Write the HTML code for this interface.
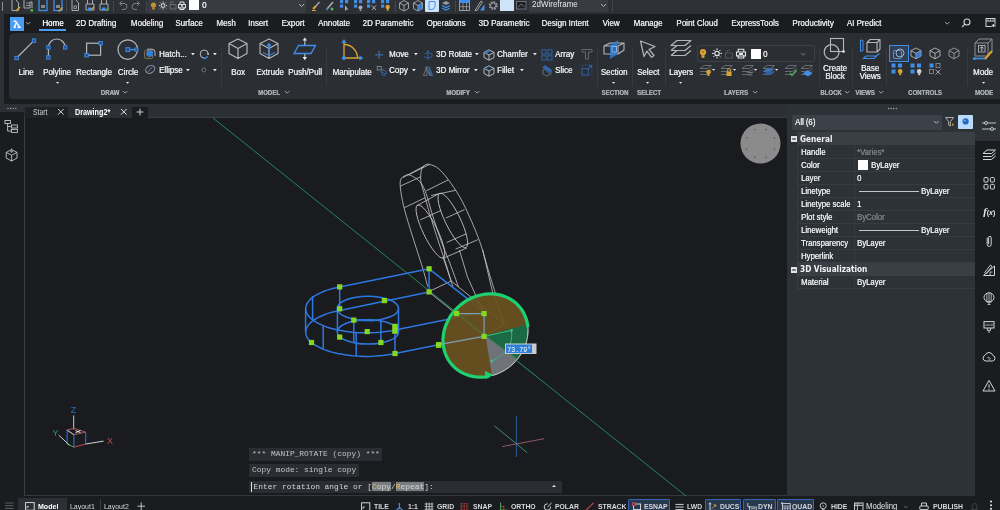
<!DOCTYPE html>
<html lang="en"><head><meta charset="utf-8"><title>Drawing2 - CAD</title>
<style>
html,body{margin:0;padding:0;background:#1a1b1e;}
body{width:1000px;height:510px;overflow:hidden;position:relative;font-family:"Liberation Sans",sans-serif;}
#app{position:absolute;left:0;top:0;width:1000px;height:510px;overflow:hidden;background:#1a1b1e;will-change:transform;}
#app div,#app span.t,#app svg,#app i.ar{position:absolute;display:block;}
span.t{white-space:nowrap;}
i.ar{width:0;height:0;border-style:solid;border-color:transparent;}
svg{overflow:visible;}
</style></head>
<body><div id="app">
<div style="left:0px;top:0px;width:1000px;height:14px;background:#2d3035;"></div>
<div style="left:0px;top:14px;width:1000px;height:19px;background:#1b1c1f;"></div>
<div style="left:0px;top:14px;width:4px;height:90px;background:#2d3136;"></div>
<div style="left:9px;top:33px;width:995px;height:66.5px;background:#2b2f34;border-radius:5px 0 0 5px;"></div>
<div style="left:4px;top:99px;width:996px;height:5px;background:#1b1c1f;"></div>
<div style="left:0px;top:104px;width:1000px;height:14px;background:#2c3034;"></div>
<div style="left:0px;top:112px;width:24px;height:6px;background:#1b1c1f;"></div>
<div style="left:0px;top:118px;width:24px;height:378px;background:#1b1c1f;"></div>
<div style="left:24px;top:117px;width:763px;height:379px;background:#1a1b1e;border-left:1px solid #3a3d42;border-top:1px solid #3a3d42;border-bottom:1px solid #34373b;box-sizing:border-box;"></div>
<div style="left:787px;top:105px;width:188px;height:391px;background:#2d3237;"></div>
<div style="left:975px;top:105px;width:25px;height:391px;background:#1b1c1f;"></div>
<div style="left:975px;top:105px;width:25px;height:36px;background:#2d3237;"></div>
<div style="left:0px;top:496px;width:1000px;height:14px;background:#1b1c1f;"></div>
<div style="left:2px;top:2px;width:1px;height:9px;background:#8a8d91;"></div>
<svg style="left:11px;top:0px;" width="10" height="13" viewBox="0 0 10 13"><path d="M1 -1 V10.5 H7.5 V3 L5 0" fill="none" stroke="#a9acb0" stroke-width="1"/><path d="M5 11 L9 7" stroke="#e0a030" stroke-width="1.6"/></svg>
<svg style="left:23px;top:0px;" width="10" height="13" viewBox="0 0 10 13"><path d="M1 -1 V8 H7 V2 H9 V8" fill="none" stroke="#a9acb0" stroke-width="1"/><path d="M3 3 H7 M3 5.5 H7" stroke="#a9acb0" stroke-width=".8"/><rect x="7.5" y="9" width="2.5" height="2.5" fill="#4fb84f"/></svg>
<svg style="left:37.5px;top:0px;" width="10" height="13" viewBox="0 0 10 13"><rect x="1" y="-1" width="8" height="11.5" fill="none" stroke="#3f8fe8" stroke-width="1.3"/><rect x="3" y="5" width="4" height="3" fill="#a9acb0" opacity=".7"/></svg>
<svg style="left:52.5px;top:0px;" width="10" height="13" viewBox="0 0 10 13"><rect x="1" y="-1" width="8" height="11.5" fill="none" stroke="#3f8fe8" stroke-width="1.3"/><rect x="3" y="5" width="4" height="3" fill="#a9acb0" opacity=".7"/><path d="M5.5 11.5 L9.5 7.5" stroke="#e0a030" stroke-width="1.6"/></svg>
<div style="left:66px;top:1px;width:1px;height:11px;background:#44484d;"></div>
<svg style="left:71px;top:0px;" width="10" height="13" viewBox="0 0 10 13"><path d="M1 -1 V10.5 H7.5 V3 L5 0" fill="none" stroke="#a9acb0" stroke-width="1"/><rect x="3" y="6" width="2.5" height="2.5" fill="none" stroke="#a9acb0" stroke-width=".8"/></svg>
<svg style="left:84.5px;top:0px;" width="10" height="13" viewBox="0 0 10 13"><path d="M1 10 V4 H9 V10 Z M2.5 4 V-1 H7.5 V4" fill="none" stroke="#a9acb0" stroke-width="1"/><rect x="3" y="7.5" width="3" height="3" fill="#3f8fe8"/><path d="M6 9.5 L9 7" stroke="#e0a030" stroke-width="1.5"/></svg>
<svg style="left:98.5px;top:0px;" width="10" height="13" viewBox="0 0 10 13"><path d="M1 10 V4 H9 V10 Z M2.5 4 V-1 H7.5 V4" fill="none" stroke="#a9acb0" stroke-width="1"/><rect x="3" y="7.5" width="3.5" height="3" fill="#3f8fe8"/><rect x="7.5" y="8.5" width="2" height="2" fill="#4fb84f"/></svg>
<div style="left:113px;top:1px;width:1px;height:11px;background:#44484d;"></div>
<svg style="left:117.5px;top:0px;" width="10" height="13" viewBox="0 0 10 13"><path d="M1.5 3.5 H6 A3 3 0 0 1 6 9.5 H4 M4 1 L1.5 3.5 L4 6" fill="none" stroke="#7d8186" stroke-width="1"/></svg>
<svg style="left:131px;top:0px;" width="10" height="13" viewBox="0 0 10 13"><path d="M8.5 3.5 H4 A3 3 0 0 0 4 9.5 H6 M6 1 L8.5 3.5 L6 6" fill="none" stroke="#7d8186" stroke-width="1"/></svg>
<div style="left:146px;top:1px;width:1px;height:11px;background:#44484d;"></div>
<div style="left:148px;top:0px;width:158px;height:13px;background:#383c42;border-radius:0 0 2px 2px;"></div>
<svg style="left:149px;top:0px;" width="12" height="13" viewBox="0 0 12 13"><circle cx="4.5" cy="5" r="2.6" fill="#c8922c"/><rect x="3.3" y="7.5" width="2.4" height="2" fill="#c8922c"/></svg>
<svg style="left:158px;top:0px;" width="12" height="13" viewBox="0 0 12 13"><circle cx="5" cy="5.5" r="1.8" fill="none" stroke="#e8e8e8" stroke-width="1"/><path d="M5 1.5V2.7M5 8.3V9.5M1 5.5H2.2M7.8 5.5H9M2.2 2.7l.9.9M7.8 8.3l-.9-.9M2.2 8.3l.9-.9M7.8 2.7l-.9.9" stroke="#e8e8e8" stroke-width=".9"/></svg>
<svg style="left:168px;top:0px;" width="12" height="13" viewBox="0 0 12 13"><path d="M2 4.5H8V9H2Z M2.5 4.5V3A1.5 1.5 0 0 1 5.5 3" fill="none" stroke="#6d7278" stroke-width=".9"/></svg>
<svg style="left:177px;top:0px;" width="12" height="13" viewBox="0 0 12 13"><path d="M1.5 8V4.5H8.5V8Z M3 4.5V2H7V4.5 M3 7V9.5H7V7" fill="none" stroke="#e0e0e0" stroke-width="1"/><circle cx="5" cy="6" r="1" fill="#e0e0e0"/></svg>
<div style="left:189px;top:0px;width:10px;height:10px;background:#ffffff;"></div>
<span class="t" style="left:201.6px;top:-0.21px;font-size:9.3px;line-height:11.62px;color:#e6e6e6;transform-origin:0 50%;transform:scaleX(0.86);text-shadow:.35px 0 0 #e6e6e6;">0</span>
<svg style="left:298.0px;top:3.25px;" width="7" height="4.5" viewBox="0 0 7 4.5"><path d="M1 1 L3.5 3.5 L6 1" fill="none" stroke="#b0b4b8" stroke-width="1"/></svg>
<svg style="left:311px;top:0px;" width="10" height="13" viewBox="0 0 10 13"><path d="M2 9 L5 6" stroke="#e0a030" stroke-width="2.2"/><path d="M5 6 L8.5 2" stroke="#a9acb0" stroke-width="1.2"/><path d="M1 10.5 H5" stroke="#e0a030" stroke-width="1"/></svg>
<svg style="left:325px;top:0px;" width="10" height="13" viewBox="0 0 10 13"><path d="M2 9 L8 2" stroke="#a9acb0" stroke-width="1.6"/><path d="M1.5 10 L3 8" stroke="#3f8fe8" stroke-width="1.4"/><circle cx="7" cy="9" r="1.5" fill="#4fb84f"/></svg>
<svg style="left:339px;top:0px;" width="11" height="13" viewBox="0 0 11 13"><rect x="1" y="0" width="3.2" height="3.2" fill="#3f8fe8"/><rect x="6" y="0" width="3.2" height="3.2" fill="#3f8fe8"/><rect x="1" y="4.5" width="3.2" height="3.2" fill="#3f8fe8"/><path d="M6 5 L9.5 10 L7.5 9.5 L6 11 Z" fill="#a9acb0"/></svg>
<svg style="left:352.5px;top:0px;" width="11" height="13" viewBox="0 0 11 13"><rect x="1" y="0" width="3.2" height="3.2" fill="#3f8fe8"/><rect x="6" y="0" width="3.2" height="3.2" fill="#3f8fe8"/><rect x="1" y="4.5" width="3.2" height="3.2" fill="#3f8fe8"/><circle cx="7.5" cy="7.5" r="2" fill="#a9acb0"/><rect x="6.7" y="9.5" width="1.6" height="1.5" fill="#a9acb0"/></svg>
<svg style="left:366px;top:0px;" width="11" height="13" viewBox="0 0 11 13"><rect x="1" y="0" width="3.2" height="3.2" fill="#3f8fe8"/><rect x="6" y="0" width="3.2" height="3.2" fill="#3f8fe8"/><rect x="1" y="4.5" width="3.2" height="3.2" fill="#3f8fe8"/><path d="M6 5.5 L10 10 M10 5.5 L6 10" stroke="#a9acb0" stroke-width="1"/></svg>
<svg style="left:380px;top:0px;" width="11" height="13" viewBox="0 0 11 13"><rect x="1" y="0" width="3.2" height="3.2" fill="#3f8fe8"/><rect x="6" y="0" width="3.2" height="3.2" fill="#3f8fe8"/><rect x="1" y="4.5" width="3.2" height="3.2" fill="#3f8fe8"/><circle cx="7.7" cy="7" r="2.2" fill="#e0a030"/><rect x="6.8" y="9" width="1.8" height="1.8" fill="#e0a030"/></svg>
<div style="left:395px;top:1px;width:1px;height:11px;background:#44484d;"></div>
<svg style="left:399px;top:0px;" width="10" height="13" viewBox="0 0 10 13"><path d="M5 .5 L9.5 3 V8.5 L5 11 L.5 8.5 V3 Z M.5 3 L5 5.5 L9.5 3 M5 5.5 V11" fill="none" stroke="#a9acb0" stroke-width="0.9" stroke-linejoin="round"/></svg>
<svg style="left:412.5px;top:0px;" width="10" height="13" viewBox="0 0 10 13"><path d="M5 .5 L9.5 3 V8.5 L5 11 L.5 8.5 V3 Z M.5 3 L5 5.5 L9.5 3 M5 5.5 V11" fill="none" stroke="#a9acb0" stroke-width="0.9" stroke-linejoin="round"/><path d="M5 5.5 L9.5 3 V8.5 L5 11Z" fill="#3f8fe8" opacity=".8"/></svg>
<div style="left:425px;top:0px;width:14px;height:12px;background:#cfe3fa;border-radius:0 0 1px 1px;"></div>
<svg style="left:427px;top:0px;" width="10" height="13" viewBox="0 0 10 13"><path d="M2 1.5 H8 V6.5 A3.5 3.5 0 0 1 4.5 9.5 H2 Z" fill="none" stroke="#4a90e2" stroke-width="1"/></svg>
<svg style="left:441px;top:0px;" width="10" height="13" viewBox="0 0 10 13"><path d="M1 3 L5 1 L9 3 L5 5Z" fill="#a9acb0" opacity=".85"/><path d="M1 5.5 L5 7.5 L9 5.5 M1 8 L5 10 L9 8" fill="none" stroke="#3f8fe8" stroke-width="1.2"/></svg>
<div style="left:455px;top:1px;width:1px;height:11px;background:#44484d;"></div>
<svg style="left:459px;top:0px;" width="12" height="13" viewBox="0 0 12 13"><rect x=".5" y="0" width="10" height="10.5" fill="none" stroke="#a9acb0" stroke-width=".9"/><rect x=".5" y="0" width="10" height="3" fill="#3f8fe8"/><path d="M4 3V10.5M7.5 3V10.5M.5 6.7H10.5" stroke="#a9acb0" stroke-width=".7"/></svg>
<svg style="left:474px;top:0px;" width="12" height="13" viewBox="0 0 12 13"><path d="M1 10.5 L7 1 L8.5 2 L3 10.5Z" fill="none" stroke="#a9acb0" stroke-width=".9"/><path d="M6 10.5 H10.5 V4Z" fill="#3f8fe8"/></svg>
<svg style="left:487.5px;top:0px;" width="11" height="13" viewBox="0 0 11 13"><circle cx="5.2" cy="5.5" r="3.6" fill="none" stroke="#9a9ea3" stroke-width="1.8" stroke-dasharray="1.6 1.2"/><circle cx="5.2" cy="5.5" r="2.6" fill="none" stroke="#9a9ea3" stroke-width="1"/></svg>
<div style="left:500px;top:0px;width:14px;height:11px;background:#cfe3fa;"></div>
<svg style="left:516px;top:0px;" width="11" height="13" viewBox="0 0 11 13"><rect x=".5" y="1.5" width="9.5" height="7.5" fill="#1d1f22" stroke="#7d8186" stroke-width=".8"/><path d="M2 7.5 L5 4 L8.5 7" fill="none" stroke="#7d8186" stroke-width=".8"/></svg>
<div style="left:529px;top:0px;width:79px;height:12px;background:#383c42;"></div>
<span class="t" style="left:531.5px;top:-0.61px;font-size:9.3px;line-height:11.62px;color:#e6e6e6;transform-origin:0 50%;transform:scaleX(0.86);">2dWireframe</span>
<svg style="left:600.0px;top:3.25px;" width="7" height="4.5" viewBox="0 0 7 4.5"><path d="M1 1 L3.5 3.5 L6 1" fill="none" stroke="#b0b4b8" stroke-width="1"/></svg>
<div style="left:612px;top:1px;width:1px;height:11px;background:#44484d;"></div>
<div style="left:10px;top:17px;width:14px;height:14px;background:#4a9cf5;"></div>
<svg style="left:10px;top:17px;" width="14" height="14" viewBox="0 0 14 14"><path d="M4.2 4.2 L5.6 4.2 L9.6 10.2 M6.3 6.2 L4.2 10.2 H5.4 M8.2 10.2 H10.2" fill="none" stroke="#fff" stroke-width="1.4" stroke-linecap="round" stroke-linejoin="round"/></svg>
<svg style="left:24.8px;top:21.4px;" width="6.4" height="4.2" viewBox="0 0 6.4 4.2"><path d="M1 1 L3.2 3.2 L5.4 1" fill="none" stroke="#9aa0a6" stroke-width="1"/></svg>
<span class="t" style="left:53px;top:18.39px;font-size:9.3px;line-height:11.62px;color:#ffffff;transform:translateX(-50%) scaleX(0.86);text-shadow:.3px 0 0 #e3e4e6;">Home</span>
<span class="t" style="left:96px;top:18.39px;font-size:9.3px;line-height:11.62px;color:#e3e4e6;transform:translateX(-50%) scaleX(0.86);text-shadow:.3px 0 0 #e3e4e6;">2D Drafting</span>
<span class="t" style="left:146.5px;top:18.39px;font-size:9.3px;line-height:11.62px;color:#e3e4e6;transform:translateX(-50%) scaleX(0.86);text-shadow:.3px 0 0 #e3e4e6;">Modeling</span>
<span class="t" style="left:189px;top:18.39px;font-size:9.3px;line-height:11.62px;color:#e3e4e6;transform:translateX(-50%) scaleX(0.86);text-shadow:.3px 0 0 #e3e4e6;">Surface</span>
<span class="t" style="left:226px;top:18.39px;font-size:9.3px;line-height:11.62px;color:#e3e4e6;transform:translateX(-50%) scaleX(0.86);text-shadow:.3px 0 0 #e3e4e6;">Mesh</span>
<span class="t" style="left:258px;top:18.39px;font-size:9.3px;line-height:11.62px;color:#e3e4e6;transform:translateX(-50%) scaleX(0.86);text-shadow:.3px 0 0 #e3e4e6;">Insert</span>
<span class="t" style="left:292.5px;top:18.39px;font-size:9.3px;line-height:11.62px;color:#e3e4e6;transform:translateX(-50%) scaleX(0.86);text-shadow:.3px 0 0 #e3e4e6;">Export</span>
<span class="t" style="left:333.5px;top:18.39px;font-size:9.3px;line-height:11.62px;color:#e3e4e6;transform:translateX(-50%) scaleX(0.86);text-shadow:.3px 0 0 #e3e4e6;">Annotate</span>
<span class="t" style="left:387.5px;top:18.39px;font-size:9.3px;line-height:11.62px;color:#e3e4e6;transform:translateX(-50%) scaleX(0.86);text-shadow:.3px 0 0 #e3e4e6;">2D Parametric</span>
<span class="t" style="left:445.5px;top:18.39px;font-size:9.3px;line-height:11.62px;color:#e3e4e6;transform:translateX(-50%) scaleX(0.86);text-shadow:.3px 0 0 #e3e4e6;">Operations</span>
<span class="t" style="left:503.5px;top:18.39px;font-size:9.3px;line-height:11.62px;color:#e3e4e6;transform:translateX(-50%) scaleX(0.86);text-shadow:.3px 0 0 #e3e4e6;">3D Parametric</span>
<span class="t" style="left:564.5px;top:18.39px;font-size:9.3px;line-height:11.62px;color:#e3e4e6;transform:translateX(-50%) scaleX(0.86);text-shadow:.3px 0 0 #e3e4e6;">Design Intent</span>
<span class="t" style="left:610.5px;top:18.39px;font-size:9.3px;line-height:11.62px;color:#e3e4e6;transform:translateX(-50%) scaleX(0.86);text-shadow:.3px 0 0 #e3e4e6;">View</span>
<span class="t" style="left:648px;top:18.39px;font-size:9.3px;line-height:11.62px;color:#e3e4e6;transform:translateX(-50%) scaleX(0.86);text-shadow:.3px 0 0 #e3e4e6;">Manage</span>
<span class="t" style="left:697px;top:18.39px;font-size:9.3px;line-height:11.62px;color:#e3e4e6;transform:translateX(-50%) scaleX(0.86);text-shadow:.3px 0 0 #e3e4e6;">Point Cloud</span>
<span class="t" style="left:754.5px;top:18.39px;font-size:9.3px;line-height:11.62px;color:#e3e4e6;transform:translateX(-50%) scaleX(0.86);text-shadow:.3px 0 0 #e3e4e6;">ExpressTools</span>
<span class="t" style="left:812.5px;top:18.39px;font-size:9.3px;line-height:11.62px;color:#e3e4e6;transform:translateX(-50%) scaleX(0.86);text-shadow:.3px 0 0 #e3e4e6;">Productivity</span>
<span class="t" style="left:863.5px;top:18.39px;font-size:9.3px;line-height:11.62px;color:#e3e4e6;transform:translateX(-50%) scaleX(0.86);text-shadow:.3px 0 0 #e3e4e6;">AI Predict</span>
<div style="left:39px;top:29px;width:27px;height:1.5px;background:#4a9cf5;"></div>
<svg style="left:943.8px;top:20.9px;" width="6.4" height="4.2" viewBox="0 0 6.4 4.2"><path d="M1 1 L3.2 3.2 L5.4 1" fill="none" stroke="#9aa0a6" stroke-width="1"/></svg>
<svg style="left:960px;top:17px;" width="12" height="12" viewBox="0 0 12 12"><circle cx="7" cy="5" r="3" fill="none" stroke="#d0d2d5" stroke-width="1.1"/><path d="M4.8 7.2 L2 10.2" stroke="#d0d2d5" stroke-width="1.2"/></svg>
<svg style="left:985px;top:17px;" width="12" height="12" viewBox="0 0 12 12"><rect x="1" y="1.5" width="9" height="8" fill="none" stroke="#d0d2d5" stroke-width="1"/><path d="M1 4H10" stroke="#d0d2d5" stroke-width="1"/><path d="M3 1.5V4M5.5 1.5V4M8 1.5V4" stroke="#d0d2d5" stroke-width=".6"/><circle cx="8.5" cy="8.5" r="1.8" fill="#d0d2d5" stroke="#1b1c1f" stroke-width=".8"/></svg>
<svg style="left:14px;top:37px;" width="24" height="24" viewBox="0 0 24 24"><path d="M2.6 21 L20 3.6" stroke="#b4b7ba" stroke-width="1.2"/><rect x="0.9000000000000001" y="19.3" width="3.4" height="3.4" fill="#1f4f96" stroke="#3f8fe8" stroke-width=".9"/><rect x="18.3" y="1.9000000000000001" width="3.4" height="3.4" fill="#1f4f96" stroke="#3f8fe8" stroke-width=".9"/></svg>
<span class="t" style="left:25.6px;top:67.19px;font-size:9.3px;line-height:11.62px;color:#e6e7e9;transform:translateX(-50%) scaleX(0.86);text-shadow:.35px 0 0 #e6e7e9;">Line</span>
<svg style="left:44px;top:36px;" width="26" height="24" viewBox="0 0 26 24"><path d="M4.4 21.4 V11.4 A8.4 8.4 0 0 1 21.2 11.4" fill="none" stroke="#b4b7ba" stroke-width="1.2"/><rect x="2.7" y="19.7" width="3.4" height="3.4" fill="#1f4f96" stroke="#3f8fe8" stroke-width=".9"/><rect x="2.7" y="9.700000000000001" width="3.4" height="3.4" fill="#1f4f96" stroke="#3f8fe8" stroke-width=".9"/><rect x="19.5" y="9.700000000000001" width="3.4" height="3.4" fill="#1f4f96" stroke="#3f8fe8" stroke-width=".9"/></svg>
<span class="t" style="left:57.4px;top:67.19px;font-size:9.3px;line-height:11.62px;color:#e6e7e9;transform:translateX(-50%) scaleX(0.86);text-shadow:.35px 0 0 #e6e7e9;">Polyline</span>
<svg style="left:55.6px;top:82.48px" width="3.2" height="1.84" viewBox="0 0 3.2 1.84"><path d="M0 0 H3.2 L1.6 1.84Z" fill="#f0f0f0"/></svg>
<svg style="left:82px;top:38px;" width="24" height="22" viewBox="0 0 24 22"><rect x="4.6" y="5.2" width="14" height="12" fill="none" stroke="#b4b7ba" stroke-width="1.2"/><rect x="2.8999999999999995" y="15.5" width="3.4" height="3.4" fill="#1f4f96" stroke="#3f8fe8" stroke-width=".9"/><rect x="16.900000000000002" y="3.5" width="3.4" height="3.4" fill="#1f4f96" stroke="#3f8fe8" stroke-width=".9"/></svg>
<span class="t" style="left:93.8px;top:67.19px;font-size:9.3px;line-height:11.62px;color:#e6e7e9;transform:translateX(-50%) scaleX(0.86);text-shadow:.35px 0 0 #e6e7e9;">Rectangle</span>
<svg style="left:116px;top:38px;" width="24" height="24" viewBox="0 0 24 24"><circle cx="11.8" cy="11.6" r="9.8" fill="none" stroke="#b4b7ba" stroke-width="1.2"/><path d="M11.8 11.6 H20.4" stroke="#3f8fe8" stroke-width="1.4"/><rect x="9.9" y="9.7" width="3.8" height="3.8" fill="#1f4f96" stroke="#3f8fe8" stroke-width=".9"/><rect x="18.9" y="10.1" width="3" height="3" fill="#1f4f96" stroke="#3f8fe8" stroke-width=".9"/></svg>
<span class="t" style="left:128.4px;top:67.19px;font-size:9.3px;line-height:11.62px;color:#e6e7e9;transform:translateX(-50%) scaleX(0.86);text-shadow:.35px 0 0 #e6e7e9;">Circle</span>
<svg style="left:126.4px;top:82.48px" width="3.2" height="1.84" viewBox="0 0 3.2 1.84"><path d="M0 0 H3.2 L1.6 1.84Z" fill="#f0f0f0"/></svg>
<svg style="left:144px;top:48px;" width="12" height="12" viewBox="0 0 12 12"><rect x=".6" y="2.4" width="8" height="8" rx="1" fill="none" stroke="#8a6f4a" stroke-width="1"/><path d="M3 1.2 H8 A3 3 0 0 1 11 4.2 V8" fill="none" stroke="#b4b7ba" stroke-width="1"/><circle cx="5.6" cy="5.6" r="3.4" fill="#2f7fd6"/></svg>
<span class="t" style="left:158.6px;top:48.99px;font-size:9.3px;line-height:11.62px;color:#e6e7e9;transform-origin:0 50%;transform:scaleX(0.86);text-shadow:.35px 0 0 #e6e7e9;">Hatch...</span>
<svg style="left:190.9px;top:52.71px" width="3.8" height="2.18" viewBox="0 0 3.8 2.18"><path d="M0 0 H3.8 L1.9 2.18Z" fill="#f0f0f0"/></svg>
<svg style="left:199px;top:49px;" width="11" height="11" viewBox="0 0 11 11"><path d="M9.2 5 A4 4 0 1 0 5.2 9" fill="none" stroke="#b4b7ba" stroke-width="1"/><path d="M4 9.2 A4 4 0 0 0 8.6 7.4" fill="none" stroke="#3f8fe8" stroke-width="1.2"/><rect x="8.2" y="4" width="1.8" height="1.8" fill="#b4b7ba"/></svg>
<svg style="left:212.5px;top:52.71px" width="3.8" height="2.18" viewBox="0 0 3.8 2.18"><path d="M0 0 H3.8 L1.9 2.18Z" fill="#f0f0f0"/></svg>
<svg style="left:145px;top:64px;" width="11" height="11" viewBox="0 0 11 11"><ellipse cx="5.2" cy="5.4" rx="4.8" ry="3.6" transform="rotate(-30 5.2 5.4)" fill="none" stroke="#8d9197" stroke-width="1.1"/><path d="M2.6 8.2 L7.8 2.6" stroke="#6d7bb0" stroke-width="1"/></svg>
<span class="t" style="left:158.6px;top:64.79px;font-size:9.3px;line-height:11.62px;color:#e6e7e9;transform-origin:0 50%;transform:scaleX(0.86);text-shadow:.35px 0 0 #e6e7e9;">Ellipse</span>
<svg style="left:186.3px;top:68.51px" width="3.8" height="2.18" viewBox="0 0 3.8 2.18"><path d="M0 0 H3.8 L1.9 2.18Z" fill="#f0f0f0"/></svg>
<svg style="left:201px;top:66.5px;" width="6" height="6" viewBox="0 0 6 6"><circle cx="2.8" cy="2.9" r="2" fill="none" stroke="#74787e" stroke-width=".9"/></svg>
<svg style="left:212.5px;top:68.51px" width="3.8" height="2.18" viewBox="0 0 3.8 2.18"><path d="M0 0 H3.8 L1.9 2.18Z" fill="#f0f0f0"/></svg>
<span class="t" style="left:109.5px;top:88.62px;font-size:7px;line-height:8.75px;color:#a6abb1;font-weight:700;transform:translateX(-50%) scaleX(0.86);text-shadow:.25px 0 0 #a6abb1;">DRAW</span>
<svg style="left:122.3px;top:90.30000000000001px;" width="6.4" height="4.2" viewBox="0 0 6.4 4.2"><path d="M1 1 L3.2 3.2 L5.4 1" fill="none" stroke="#a6abb1" stroke-width="0.9"/></svg>
<div style="left:221px;top:48px;width:1px;height:38px;background:#373b40;"></div>
<svg style="left:228px;top:38px;" width="20" height="22" viewBox="0 0 20 22"><path d="M10 1 L19 5.5 V15.5 L10 20.5 L1 15.5 V5.5 Z M1 5.5 L10 10.5 L19 5.5 M10 10.5 V20.5" fill="none" stroke="#b4b7ba" stroke-width="1.2" stroke-linejoin="round"/></svg>
<span class="t" style="left:238.2px;top:67.19px;font-size:9.3px;line-height:11.62px;color:#e6e7e9;transform:translateX(-50%) scaleX(0.86);text-shadow:.35px 0 0 #e6e7e9;">Box</span>
<svg style="left:259px;top:38px;" width="20" height="22" viewBox="0 0 20 22"><path d="M10 1 L19 5.5 V15.5 L10 20.5 L1 15.5 V5.5 Z M1 5.5 L10 10.5 L19 5.5 M10 10.5 V20.5" fill="none" stroke="#b4b7ba" stroke-width="1.1" stroke-linejoin="round"/><path d="M10 14 V6.5" stroke="#3f8fe8" stroke-width="1.6"/><path d="M7.4 8.2 L10 4.6 L12.6 8.2Z" fill="#3f8fe8"/><path d="M4 14.5 L10 17.5 L16 14.5" fill="none" stroke="#3f8fe8" stroke-width="1"/></svg>
<span class="t" style="left:269.5px;top:67.19px;font-size:9.3px;line-height:11.62px;color:#e6e7e9;transform:translateX(-50%) scaleX(0.86);text-shadow:.35px 0 0 #e6e7e9;">Extrude</span>
<svg style="left:293.4px;top:35.8px;" width="24" height="24" viewBox="0 0 24 24"><path d="M5.5 9.5 H22.5 L18 17.5 H1 Z" fill="none" stroke="#3f8fe8" stroke-width="1.3"/><path d="M11.8 3.5 V9 M11.8 18 V23" stroke="#b4b7ba" stroke-width="1.2"/><path d="M9.6 4.6 L11.8 1.4 L14 4.6Z M9.6 21 L11.8 24.2 L14 21Z" fill="#e8e8e8"/></svg>
<span class="t" style="left:304.6px;top:67.19px;font-size:9.3px;line-height:11.62px;color:#e6e7e9;transform:translateX(-50%) scaleX(0.86);text-shadow:.35px 0 0 #e6e7e9;">Push/Pull</span>
<span class="t" style="left:269px;top:88.62px;font-size:7px;line-height:8.75px;color:#a6abb1;font-weight:700;transform:translateX(-50%) scaleX(0.86);text-shadow:.25px 0 0 #a6abb1;">MODEL</span>
<svg style="left:283.8px;top:90.30000000000001px;" width="6.4" height="4.2" viewBox="0 0 6.4 4.2"><path d="M1 1 L3.2 3.2 L5.4 1" fill="none" stroke="#a6abb1" stroke-width="0.9"/></svg>
<div style="left:326px;top:48px;width:1px;height:38px;background:#373b40;"></div>
<svg style="left:340px;top:38px;" width="24" height="24" viewBox="0 0 24 24"><path d="M4 3 V20 H21" fill="none" stroke="#d9a436" stroke-width="1.3"/><path d="M4 6.5 A13.5 13.5 0 0 1 17.5 20" fill="none" stroke="#d9a436" stroke-width="1.3"/><circle cx="4" cy="20" r="2.1" fill="#3f8fe8"/><path d="M1.4 5 L4 1 L6.6 5Z M19.4 17.4 L23.4 20 L19.4 22.6Z" fill="#3f8fe8"/></svg>
<span class="t" style="left:351.8px;top:67.19px;font-size:9.3px;line-height:11.62px;color:#e6e7e9;transform:translateX(-50%) scaleX(0.86);text-shadow:.35px 0 0 #e6e7e9;">Manipulate</span>
<svg style="left:373px;top:48.8px;" width="12" height="12" viewBox="0 0 12 12"><g transform="translate(1.4 1.2) scale(.78)" opacity=".85"><path d="M6 1.4 V10.6 M1.4 6 H10.6" stroke="#3f8fe8" stroke-width="1"/><path d="M4.8 2.6 L6 .8 L7.2 2.6Z M4.8 9.4 L6 11.2 L7.2 9.4Z M2.6 4.8 L.8 6 L2.6 7.2Z M9.4 4.8 L11.2 6 L9.4 7.2Z" fill="#3f8fe8"/></g></svg>
<span class="t" style="left:389.4px;top:48.99px;font-size:9.3px;line-height:11.62px;color:#e6e7e9;transform-origin:0 50%;transform:scaleX(0.86);text-shadow:.35px 0 0 #e6e7e9;">Move</span>
<svg style="left:413.5px;top:53.11px" width="3.8" height="2.18" viewBox="0 0 3.8 2.18"><path d="M0 0 H3.8 L1.9 2.18Z" fill="#f0f0f0"/></svg>
<svg style="left:376px;top:64.6px;" width="12" height="12" viewBox="0 0 12 12"><rect x="1.2" y="1.4" width="4" height="3.6" fill="none" stroke="#8d9197" stroke-width=".8"/><path d="M5.6 5.6 L8 4.6 L10.6 7.4 L8.6 10.8 L6 9.6Z" fill="none" stroke="#3573c4" stroke-width=".9" stroke-linejoin="round"/><path d="M7 7 L9 9" stroke="#3573c4" stroke-width=".8"/></svg>
<span class="t" style="left:389.4px;top:64.79px;font-size:9.3px;line-height:11.62px;color:#e6e7e9;transform-origin:0 50%;transform:scaleX(0.86);text-shadow:.35px 0 0 #e6e7e9;">Copy</span>
<svg style="left:412.1px;top:68.91px" width="3.8" height="2.18" viewBox="0 0 3.8 2.18"><path d="M0 0 H3.8 L1.9 2.18Z" fill="#f0f0f0"/></svg>
<svg style="left:422px;top:48.8px;" width="12" height="12" viewBox="0 0 12 12"><g opacity=".8"><path d="M6 1.6 V10.6" stroke="#3573c4" stroke-width=".9"/><ellipse cx="6" cy="6.4" rx="4.2" ry="2.4" fill="none" stroke="#3573c4" stroke-width=".9" stroke-dasharray="9 3"/><path d="M4.9 2.8 L6 1 L7.1 2.8Z" fill="#3573c4"/></g></svg>
<span class="t" style="left:436px;top:48.99px;font-size:9.3px;line-height:11.62px;color:#e6e7e9;transform-origin:0 50%;transform:scaleX(0.86);text-shadow:.35px 0 0 #e6e7e9;">3D Rotate</span>
<svg style="left:475.1px;top:53.11px" width="3.8" height="2.18" viewBox="0 0 3.8 2.18"><path d="M0 0 H3.8 L1.9 2.18Z" fill="#f0f0f0"/></svg>
<svg style="left:422px;top:64.6px;" width="12" height="12" viewBox="0 0 12 12"><path d="M5 1.4 L1.4 10.4 H5Z" fill="none" stroke="#7d8187" stroke-width=".8"/><path d="M7 1.4 L10.6 10.4 H7Z" fill="#3a5680" stroke="#3573c4" stroke-width=".7"/><path d="M3.4 2.4 L8.6 10.8" stroke="#7d8187" stroke-width=".7"/></svg>
<span class="t" style="left:436px;top:64.79px;font-size:9.3px;line-height:11.62px;color:#e6e7e9;transform-origin:0 50%;transform:scaleX(0.86);text-shadow:.35px 0 0 #e6e7e9;">3D Mirror</span>
<svg style="left:474.1px;top:68.91px" width="3.8" height="2.18" viewBox="0 0 3.8 2.18"><path d="M0 0 H3.8 L1.9 2.18Z" fill="#f0f0f0"/></svg>
<svg style="left:483px;top:48.8px;" width="12" height="12" viewBox="0 0 12 12"><path d="M6 .8 L11 3.4 V8.6 L6 11.2 L1 8.6 V3.4Z M1 3.4 L6 6 L11 3.4 M6 6 V11.2" fill="none" stroke="#c4c7ca" stroke-width=".9" stroke-linejoin="round"/><path d="M1 3.4 L6 .8 L8 1.9 L3 4.5Z" fill="#3573c4"/></svg>
<span class="t" style="left:497.4px;top:48.99px;font-size:9.3px;line-height:11.62px;color:#e6e7e9;transform-origin:0 50%;transform:scaleX(0.86);text-shadow:.35px 0 0 #e6e7e9;">Chamfer</span>
<svg style="left:533.1px;top:53.11px" width="3.8" height="2.18" viewBox="0 0 3.8 2.18"><path d="M0 0 H3.8 L1.9 2.18Z" fill="#f0f0f0"/></svg>
<svg style="left:483px;top:64.6px;" width="12" height="12" viewBox="0 0 12 12"><path d="M6 .8 L11 3.4 V8.6 L6 11.2 L1 8.6 V3.4Z M1 3.4 L6 6 L11 3.4 M6 6 V11.2" fill="none" stroke="#c4c7ca" stroke-width=".9" stroke-linejoin="round"/><path d="M1.2 6 V3.4 L6 1 L8.5 2.2 A7 7 0 0 0 1.2 6Z" fill="#3573c4"/></svg>
<span class="t" style="left:497.4px;top:64.79px;font-size:9.3px;line-height:11.62px;color:#e6e7e9;transform-origin:0 50%;transform:scaleX(0.86);text-shadow:.35px 0 0 #e6e7e9;">Fillet</span>
<svg style="left:520.1px;top:68.91px" width="3.8" height="2.18" viewBox="0 0 3.8 2.18"><path d="M0 0 H3.8 L1.9 2.18Z" fill="#f0f0f0"/></svg>
<svg style="left:541px;top:48.8px;" width="12" height="12" viewBox="0 0 12 12"><rect x=".8" y=".8" width="4.2" height="4.2" fill="none" stroke="#2f62a8" stroke-width="1"/><rect x="6.8" y=".8" width="4.2" height="4.2" fill="none" stroke="#2f62a8" stroke-width="1"/><rect x=".8" y="6.8" width="4.2" height="4.2" fill="none" stroke="#2f62a8" stroke-width="1"/><rect x="6.8" y="6.8" width="4.2" height="4.2" fill="none" stroke="#2f62a8" stroke-width="1"/></svg>
<span class="t" style="left:555.4px;top:48.99px;font-size:9.3px;line-height:11.62px;color:#e6e7e9;transform-origin:0 50%;transform:scaleX(0.86);text-shadow:.35px 0 0 #e6e7e9;">Array</span>
<svg style="left:541px;top:64.6px;" width="12" height="12" viewBox="0 0 12 12"><path d="M2 5 L6 3 L10 5 V9 L6 11 L2 9Z" fill="none" stroke="#6d7278" stroke-width=".9"/><path d="M1 2 L8 9 L11 5 L4 0Z" fill="#2f6fc0" opacity=".75"/></svg>
<span class="t" style="left:555.4px;top:64.79px;font-size:9.3px;line-height:11.62px;color:#e6e7e9;transform-origin:0 50%;transform:scaleX(0.86);text-shadow:.35px 0 0 #e6e7e9;">Slice</span>
<svg style="left:581px;top:48px;" width="12" height="12" viewBox="0 0 12 12"><path d="M1 1.5 H11 V4 H7.5 V11 H4.5 V4 H1Z" fill="none" stroke="#6c7076" stroke-width=".9"/></svg>
<svg style="left:581px;top:64px;" width="12" height="12" viewBox="0 0 12 12"><rect x="1" y="4.6" width="6.4" height="6.4" fill="none" stroke="#2f62a8" stroke-width=".9"/><rect x="1" y="1" width="10" height="10" fill="none" stroke="#2f62a8" stroke-width=".6" stroke-dasharray="1.5 1.2"/><path d="M6.4 5.6 L10.2 1.8 M8 1.6 H10.4 V4" fill="none" stroke="#3573c4" stroke-width=".8"/></svg>
<span class="t" style="left:458px;top:88.62px;font-size:7px;line-height:8.75px;color:#a6abb1;font-weight:700;transform:translateX(-50%) scaleX(0.86);text-shadow:.25px 0 0 #a6abb1;">MODIFY</span>
<svg style="left:473.8px;top:90.30000000000001px;" width="6.4" height="4.2" viewBox="0 0 6.4 4.2"><path d="M1 1 L3.2 3.2 L5.4 1" fill="none" stroke="#a6abb1" stroke-width="0.9"/></svg>
<div style="left:597px;top:48px;width:1px;height:38px;background:#373b40;"></div>
<svg style="left:602px;top:37px;" width="24" height="24" viewBox="0 0 24 24"><path d="M2 9 L8 6 H22 V13 L16 17 H2Z M2 9 H16 L22 6 M16 9 V17" fill="none" stroke="#b4b7ba" stroke-width="1.1" stroke-linejoin="round"/><path d="M8 8 L16 3 V17 L8 22Z" fill="#2f7fd6" opacity=".8"/><path d="M10 9.5 H14.5 V15 H10Z" fill="none" stroke="#9cc6f5" stroke-width=".8"/></svg>
<span class="t" style="left:614px;top:67.19px;font-size:9.3px;line-height:11.62px;color:#e6e7e9;transform:translateX(-50%) scaleX(0.86);text-shadow:.35px 0 0 #e6e7e9;">Section</span>
<svg style="left:612.4px;top:82.48px" width="3.2" height="1.84" viewBox="0 0 3.2 1.84"><path d="M0 0 H3.2 L1.6 1.84Z" fill="#f0f0f0"/></svg>
<span class="t" style="left:614.5px;top:88.62px;font-size:7px;line-height:8.75px;color:#a6abb1;font-weight:700;transform:translateX(-50%) scaleX(0.86);text-shadow:.25px 0 0 #a6abb1;">SECTION</span>
<div style="left:632px;top:48px;width:1px;height:38px;background:#373b40;"></div>
<svg style="left:638px;top:38px;" width="20" height="22" viewBox="0 0 20 22"><path d="M2.5 3 L17 8.5 L11 11.5 L16 17.5 L13.6 19.4 L8.8 13.2 L6 18.5Z" fill="none" stroke="#b4b7ba" stroke-width="1.2" stroke-linejoin="round"/></svg>
<span class="t" style="left:648px;top:67.19px;font-size:9.3px;line-height:11.62px;color:#e6e7e9;transform:translateX(-50%) scaleX(0.86);text-shadow:.35px 0 0 #e6e7e9;">Select</span>
<svg style="left:646.4px;top:82.48px" width="3.2" height="1.84" viewBox="0 0 3.2 1.84"><path d="M0 0 H3.2 L1.6 1.84Z" fill="#f0f0f0"/></svg>
<span class="t" style="left:648.5px;top:88.62px;font-size:7px;line-height:8.75px;color:#a6abb1;font-weight:700;transform:translateX(-50%) scaleX(0.86);text-shadow:.25px 0 0 #a6abb1;">SELECT</span>
<div style="left:665px;top:48px;width:1px;height:38px;background:#373b40;"></div>
<svg style="left:669px;top:38px;" width="24" height="24" viewBox="0 0 24 24"><path d="M2 7.5 L8 2.5 H22 L16 7.5Z M2 12.5 L8 7.5 M22 7.5 L16 12.5 H2 M2 17.5 L8 12.5 M22 12.5 L16 17.5 H2" fill="none" stroke="#b4b7ba" stroke-width="1.2" stroke-linejoin="round"/></svg>
<span class="t" style="left:681px;top:67.19px;font-size:9.3px;line-height:11.62px;color:#e6e7e9;transform:translateX(-50%) scaleX(0.86);text-shadow:.35px 0 0 #e6e7e9;">Layers</span>
<svg style="left:679.4px;top:82.48px" width="3.2" height="1.84" viewBox="0 0 3.2 1.84"><path d="M0 0 H3.2 L1.6 1.84Z" fill="#f0f0f0"/></svg>
<div style="left:697px;top:45px;width:118px;height:17px;background:transparent;border:1px solid #3d4147;border-radius:2px;box-sizing:border-box;"></div>
<svg style="left:698px;top:47.4px;" width="12" height="13" viewBox="0 0 12 13"><circle cx="5" cy="5.2" r="3.1" fill="#d9a436"/><rect x="3.5" y="8.2" width="3" height="2.6" fill="#d9a436"/><path d="M4 5 H6" stroke="#5a4210" stroke-width=".7"/></svg>
<svg style="left:711px;top:47px;" width="13" height="13" viewBox="0 0 13 13"><circle cx="6" cy="6.4" r="2.2" fill="none" stroke="#f0f0f0" stroke-width="1.1"/><path d="M6 1.4V3M6 9.8V11.4M1 6.4H2.6M9.4 6.4H11M2.5 2.9l1.1 1.1M9.5 9.9l-1.1-1.1M2.5 9.9l1.1-1.1M9.5 2.9l-1.1 1.1" stroke="#f0f0f0" stroke-width="1"/></svg>
<svg style="left:724px;top:48px;" width="11" height="12" viewBox="0 0 11 12"><path d="M1.5 5H8.5V10H1.5Z M3 5V3.2A2 2 0 0 1 6 2.5" fill="none" stroke="#565b61" stroke-width=".9"/></svg>
<svg style="left:735px;top:47px;" width="13" height="13" viewBox="0 0 13 13"><path d="M1.5 9V5H10.5V9Z M3.2 5V2.2H8.8V5 M3.2 8V11H8.8V8" fill="none" stroke="#e6e6e6" stroke-width="1.1"/><rect x="4" y="6" width="4" height="2" fill="#e6e6e6"/></svg>
<div style="left:751px;top:49px;width:9.5px;height:9.5px;background:#ffffff;"></div>
<span class="t" style="left:763.2px;top:49.39px;font-size:9.3px;line-height:11.62px;color:#e6e6e6;transform-origin:0 50%;transform:scaleX(0.86);text-shadow:.35px 0 0 #e6e6e6;">0</span>
<svg style="left:800.3px;top:51.9px;" width="6.4" height="4.2" viewBox="0 0 6.4 4.2"><path d="M1 1 L3.2 3.2 L5.4 1" fill="none" stroke="#7d8288" stroke-width="0.9"/></svg>
<svg style="left:699px;top:64px;" width="14" height="13" viewBox="0 0 14 13"><path d="M1 4.5 L5 1.5 H12.5 L8.5 4.5Z M1 7.5 H8.5 L12.5 4.5 M1 10.5 H8.5 L12.5 7.5" fill="none" stroke="#6e7278" stroke-width=".9" stroke-linejoin="round"/><circle cx="9.5" cy="8" r="2.3" fill="#d9a436"/><rect x="8.5" y="10" width="2" height="2" fill="#d9a436"/></svg>
<svg style="left:712.2px;top:68.88px" width="3.2" height="1.84" viewBox="0 0 3.2 1.84"><path d="M0 0 H3.2 L1.6 1.84Z" fill="#f0f0f0"/></svg>
<svg style="left:720px;top:64px;" width="14" height="13" viewBox="0 0 14 13"><path d="M1 4.5 L5 1.5 H12.5 L8.5 4.5Z M1 7.5 H8.5 L12.5 4.5 M1 10.5 H8.5 L12.5 7.5" fill="none" stroke="#6e7278" stroke-width=".9" stroke-linejoin="round"/><rect x="6.5" y="7.5" width="5" height="4.5" fill="#d9a436"/><path d="M7.6 7.5 V6 A1.4 1.4 0 0 1 10.4 6 V7.5" fill="none" stroke="#d9a436" stroke-width=".9"/></svg>
<svg style="left:733.2px;top:68.88px" width="3.2" height="1.84" viewBox="0 0 3.2 1.84"><path d="M0 0 H3.2 L1.6 1.84Z" fill="#f0f0f0"/></svg>
<svg style="left:741px;top:64px;" width="14" height="13" viewBox="0 0 14 13"><path d="M1 4.5 L5 1.5 H12.5 L8.5 4.5Z M1 7.5 H8.5 L12.5 4.5 M1 10.5 H8.5 L12.5 7.5" fill="none" stroke="#6e7278" stroke-width=".9" stroke-linejoin="round"/><path d="M6 8.5 H12 M7 11 H11.5" stroke="#6d7278" stroke-width="1.2"/></svg>
<svg style="left:754.2px;top:68.88px" width="3.2" height="1.84" viewBox="0 0 3.2 1.84"><path d="M0 0 H3.2 L1.6 1.84Z" fill="#f0f0f0"/></svg>
<svg style="left:762px;top:64px;" width="14" height="13" viewBox="0 0 14 13"><path d="M1 4.5 L5 1.5 H12.5 L8.5 4.5Z M1 7.5 H8.5 L12.5 4.5 M1 10.5 H8.5 L12.5 7.5" fill="none" stroke="#6e7278" stroke-width=".9" stroke-linejoin="round"/><path d="M1 7.5 L5 4.5 H12.5 L8.5 7.5Z" fill="#3573c4"/><path d="M1 10.5 L5 7.5 H12.5 L8.5 10.5Z" fill="#2a5ea8"/></svg>
<svg style="left:775.2px;top:68.88px" width="3.2" height="1.84" viewBox="0 0 3.2 1.84"><path d="M0 0 H3.2 L1.6 1.84Z" fill="#f0f0f0"/></svg>
<svg style="left:784px;top:64px;" width="14" height="13" viewBox="0 0 14 13"><path d="M1 4.5 L5 1.5 H12.5 L8.5 4.5Z M1 7.5 H8.5 L12.5 4.5 M1 10.5 H8.5 L12.5 7.5" fill="none" stroke="#6e7278" stroke-width=".9" stroke-linejoin="round"/><path d="M6 9 L8 11.5 L12.5 6" fill="none" stroke="#4fae5a" stroke-width="1.4"/></svg>
<svg style="left:800px;top:64px;" width="14" height="13" viewBox="0 0 14 13"><path d="M1 4.5 L5 1.5 H12.5 L8.5 4.5Z M1 7.5 H8.5 L12.5 4.5 M1 10.5 H8.5 L12.5 7.5" fill="none" stroke="#6e7278" stroke-width=".9" stroke-linejoin="round"/><path d="M3 9.5 L7.5 6 L12.5 9.5 L8 12.5Z" fill="#3f8fe8"/></svg>
<span class="t" style="left:735.8px;top:88.62px;font-size:7px;line-height:8.75px;color:#a6abb1;font-weight:700;transform:translateX(-50%) scaleX(0.86);text-shadow:.25px 0 0 #a6abb1;">LAYERS</span>
<svg style="left:752.1999999999999px;top:90.30000000000001px;" width="6.4" height="4.2" viewBox="0 0 6.4 4.2"><path d="M1 1 L3.2 3.2 L5.4 1" fill="none" stroke="#a6abb1" stroke-width="0.9"/></svg>
<div style="left:819px;top:48px;width:1px;height:38px;background:#373b40;"></div>
<svg style="left:823px;top:37px;" width="24" height="24" viewBox="0 0 24 24"><rect x="7.5" y="1.5" width="13" height="13" fill="none" stroke="#b4b7ba" stroke-width="1.1"/><circle cx="8.6" cy="15" r="7.4" fill="none" stroke="#b4b7ba" stroke-width="1.2"/><circle cx="20.5" cy="14.5" r="1.3" fill="#f0f0f0"/></svg>
<span class="t" style="left:835px;top:62.79px;font-size:9.3px;line-height:11.62px;color:#e6e7e9;transform:translateX(-50%) scaleX(0.86);text-shadow:.35px 0 0 #e6e7e9;">Create</span>
<span class="t" style="left:835px;top:71.39px;font-size:9.3px;line-height:11.62px;color:#e6e7e9;transform:translateX(-50%) scaleX(0.86);text-shadow:.35px 0 0 #e6e7e9;">Block</span>
<span class="t" style="left:830.5px;top:88.62px;font-size:7px;line-height:8.75px;color:#a6abb1;font-weight:700;transform:translateX(-50%) scaleX(0.86);text-shadow:.25px 0 0 #a6abb1;">BLOCK</span>
<svg style="left:844.3px;top:90.30000000000001px;" width="6.4" height="4.2" viewBox="0 0 6.4 4.2"><path d="M1 1 L3.2 3.2 L5.4 1" fill="none" stroke="#a6abb1" stroke-width="0.9"/></svg>
<div style="left:852px;top:48px;width:1px;height:38px;background:#373b40;"></div>
<svg style="left:857px;top:37px;" width="26" height="24" viewBox="0 0 26 24"><path d="M10 5.5 L13 2.5 H23 V12 L20 15 H10Z M10 5.5 H20 L23 2.5 M20 5.5 V15" fill="none" stroke="#b4b7ba" stroke-width="1.1" stroke-linejoin="round"/><path d="M3.5 3 V14.5 M6 3.5 V13.5 M3.5 3 L6 3.5 M3.5 14.5 L6 13.5" stroke="#3f8fe8" stroke-width="1"/><path d="M9 19 H19.5 L22.5 16.5 M9 19 L6.5 21.5 H17 L19.5 19" fill="none" stroke="#3f8fe8" stroke-width="1.1"/></svg>
<span class="t" style="left:870px;top:62.79px;font-size:9.3px;line-height:11.62px;color:#e6e7e9;transform:translateX(-50%) scaleX(0.86);text-shadow:.35px 0 0 #e6e7e9;">Base</span>
<span class="t" style="left:870px;top:71.39px;font-size:9.3px;line-height:11.62px;color:#e6e7e9;transform:translateX(-50%) scaleX(0.86);text-shadow:.35px 0 0 #e6e7e9;">Views</span>
<span class="t" style="left:864.5px;top:88.62px;font-size:7px;line-height:8.75px;color:#a6abb1;font-weight:700;transform:translateX(-50%) scaleX(0.86);text-shadow:.25px 0 0 #a6abb1;">VIEWS</span>
<svg style="left:878.3px;top:90.30000000000001px;" width="6.4" height="4.2" viewBox="0 0 6.4 4.2"><path d="M1 1 L3.2 3.2 L5.4 1" fill="none" stroke="#a6abb1" stroke-width="0.9"/></svg>
<div style="left:886px;top:48px;width:1px;height:38px;background:#373b40;"></div>
<div style="left:889px;top:45px;width:20px;height:17px;background:#2f3f55;border:1px solid #3f8fe8;box-sizing:border-box;"></div>
<svg style="left:892px;top:47px;" width="14" height="13" viewBox="0 0 14 13"><rect x="1.5" y="3.5" width="8" height="8" rx="1.5" fill="none" stroke="#6f8fb5" stroke-width="1"/><circle cx="8" cy="6" r="4" fill="none" stroke="#9ab4d4" stroke-width="1"/></svg>
<svg style="left:910px;top:47px;" width="12" height="13" viewBox="0 0 12 13"><path d="M6 1 L11 3.6 V9 L6 11.8 L1 9 V3.6 Z M1 3.6 L6 6.4 L11 3.6 M6 6.4 V11.8" fill="none" stroke="#b4b7ba" stroke-width=".9" stroke-linejoin="round"/><path d="M6 6.4 L11 3.6 V9 L6 11.8Z" fill="#3f8fe8" opacity=".8"/></svg>
<svg style="left:929px;top:47px;" width="12" height="13" viewBox="0 0 12 13"><path d="M6 1 L11 3.6 V9 L6 11.8 L1 9 V3.6 Z M1 3.6 L6 6.4 L11 3.6 M6 6.4 V11.8" fill="none" stroke="#b4b7ba" stroke-width=".9" stroke-linejoin="round"/></svg>
<svg style="left:948px;top:47px;" width="12" height="13" viewBox="0 0 12 13"><path d="M6 1 L11 3.6 V9 L6 11.8 L1 9 V3.6 Z M1 3.6 L6 6.4 L11 3.6 M6 6.4 V11.8" fill="none" stroke="#9a9ea3" stroke-width=".9" stroke-linejoin="round"/></svg>
<svg style="left:891px;top:63px;" width="13" height="13" viewBox="0 0 13 13"><rect x=".5" y=".5" width="4" height="4" fill="#3f8fe8"/><rect x="7" y=".5" width="4" height="4" fill="#3f8fe8"/><rect x=".5" y="6.5" width="4" height="4" fill="#3f8fe8"/><circle cx="9.2" cy="8.4" r="2.3" fill="#d9a436"/><rect x="8.2" y="10.4" width="2" height="1.8" fill="#d9a436"/></svg>
<svg style="left:910px;top:63px;" width="13" height="13" viewBox="0 0 13 13"><rect x=".5" y=".5" width="4" height="4" fill="#3f8fe8"/><rect x="7" y=".5" width="4" height="4" fill="#3f8fe8"/><rect x=".5" y="6.5" width="4" height="4" fill="#3f8fe8"/><circle cx="9.2" cy="8.4" r="2.3" fill="#d0d0d0"/><rect x="8.2" y="10.4" width="2" height="1.8" fill="#d0d0d0"/></svg>
<svg style="left:929px;top:63px;" width="13" height="13" viewBox="0 0 13 13"><rect x=".5" y=".5" width="4" height="4" fill="#3f8fe8"/><rect x="7" y=".5" width="4" height="4" fill="none" stroke="#8d9197" stroke-width=".8"/><rect x=".5" y="6.5" width="4" height="4" fill="none" stroke="#8d9197" stroke-width=".8"/><path d="M6.5 6.5 L11.5 11.5 M11.5 6.5 L6.5 11.5" stroke="#b0b0b0" stroke-width=".9"/></svg>
<span class="t" style="left:925px;top:88.62px;font-size:7px;line-height:8.75px;color:#a6abb1;font-weight:700;transform:translateX(-50%) scaleX(0.86);text-shadow:.25px 0 0 #a6abb1;">CONTROLS</span>
<div style="left:967px;top:48px;width:1px;height:38px;background:#373b40;"></div>
<svg style="left:972px;top:37px;" width="22" height="24" viewBox="0 0 22 24"><path d="M3 6 L7 2 H20 V15 L16 19 H3Z M3 6 H16 L20 2 M16 6 V19" fill="none" stroke="#8d9197" stroke-width="1" stroke-linejoin="round"/><rect x="6.5" y="8.5" width="6.5" height="6.5" fill="none" stroke="#c0c0c0" stroke-width=".8"/><path d="M9.8 14 V10 M8.2 11.4 L9.8 9.6 L11.4 11.4" fill="none" stroke="#e0e0e0" stroke-width=".8"/><path d="M2 21.5 H14" stroke="#3f8fe8" stroke-width="1.6"/><circle cx="2.5" cy="21.5" r="1.6" fill="#3f8fe8"/><path d="M13 22 L20 14" stroke="#d9a436" stroke-width="2"/></svg>
<span class="t" style="left:983.4px;top:67.19px;font-size:9.3px;line-height:11.62px;color:#e6e7e9;transform:translateX(-50%) scaleX(0.86);text-shadow:.35px 0 0 #e6e7e9;">Mode</span>
<svg style="left:981.8px;top:82.48px" width="3.2" height="1.84" viewBox="0 0 3.2 1.84"><path d="M0 0 H3.2 L1.6 1.84Z" fill="#f0f0f0"/></svg>
<span class="t" style="left:984px;top:88.62px;font-size:7px;line-height:8.75px;color:#a6abb1;font-weight:700;transform:translateX(-50%) scaleX(0.86);text-shadow:.25px 0 0 #a6abb1;">MODE</span>
<svg style="left:5.5px;top:107px;" width="14" height="3" viewBox="0 0 14 3"><circle cx="2" cy="1.5" r=".7" fill="#a0a4a8"/><circle cx="4.6" cy="1.5" r=".7" fill="#a0a4a8"/><circle cx="7.2" cy="1.5" r=".7" fill="#a0a4a8"/><circle cx="9.8" cy="1.5" r=".7" fill="#a0a4a8"/></svg>
<div style="left:24.6px;top:106.5px;width:43.4px;height:11.5px;background:#1f2124;"></div>
<span class="t" style="left:32.8px;top:106.95px;font-size:8.4px;line-height:10.5px;color:#c9cbce;transform-origin:0 50%;transform:scaleX(0.82);">Start</span>
<svg style="left:57px;top:108.4px;" width="8" height="8" viewBox="0 0 8 8"><path d="M1 1 L6.6 6.6 M6.6 1 L1 6.6" stroke="#d0d2d5" stroke-width="1"/></svg>
<div style="left:68px;top:106.5px;width:64px;height:11.5px;background:#2c3034;"></div>
<span class="t" style="left:75.4px;top:106.95px;font-size:8.4px;line-height:10.5px;color:#ffffff;font-weight:700;transform-origin:0 50%;transform:scaleX(0.86);">Drawing2*</span>
<svg style="left:120px;top:108.4px;" width="8" height="8" viewBox="0 0 8 8"><path d="M1 1 L6.6 6.6 M6.6 1 L1 6.6" stroke="#e4e5e7" stroke-width="1"/></svg>
<div style="left:132px;top:106.5px;width:16px;height:11.5px;background:#1b1c1f;"></div>
<svg style="left:136.4px;top:108.2px;" width="8" height="8" viewBox="0 0 8 8"><path d="M4 .6 V7.4 M.6 4 H7.4" stroke="#d0d2d5" stroke-width="1"/></svg>
<svg style="left:4px;top:119px;" width="16" height="15" viewBox="0 0 16 15"><rect x="1" y="1.5" width="5.4" height="3" fill="none" stroke="#c4c7ca" stroke-width=".9"/><rect x="7.4" y="6" width="6" height="3" fill="none" stroke="#c4c7ca" stroke-width=".9"/><rect x="7.4" y="10.4" width="6" height="3" fill="none" stroke="#c4c7ca" stroke-width=".9"/><path d="M3.6 4.5 V12 H7.4 M3.6 7.5 H7.4" fill="none" stroke="#c4c7ca" stroke-width=".9"/></svg>
<svg style="left:5px;top:148px;" width="14" height="14" viewBox="0 0 14 14"><path d="M6.6 1.6 L12 4.4 V10 L6.6 13 L1.2 10 V4.4 Z M1.2 4.4 L6.6 7.2 L12 4.4 M6.6 7.2 V13" fill="none" stroke="#c4c7ca" stroke-width=".9" stroke-linejoin="round"/><path d="M6.6 .4 V4.4 M5.2 3 L6.6 4.6 L8 3" fill="none" stroke="#c4c7ca" stroke-width=".7"/></svg>
<svg style="left:0;top:0;" width="1000" height="510" viewBox="0 0 1000 510"><path d="M213 118 L686 496" stroke="#1f8a55" stroke-width="1" fill="none"/><circle cx="760.5" cy="143.5" r="20" fill="#8b8b8b"/><circle cx="774.4" cy="149.2" r=".8" fill="#5a5a5a"/><circle cx="766.2" cy="157.4" r=".8" fill="#5a5a5a"/><circle cx="754.8" cy="157.4" r=".8" fill="#5a5a5a"/><circle cx="746.6" cy="149.2" r=".8" fill="#5a5a5a"/><circle cx="746.6" cy="137.8" r=".8" fill="#5a5a5a"/><circle cx="754.8" cy="129.6" r=".8" fill="#5a5a5a"/><circle cx="766.2" cy="129.6" r=".8" fill="#5a5a5a"/><circle cx="774.4" cy="137.8" r=".8" fill="#5a5a5a"/><ellipse cx="430.4" cy="231.5" rx="29.4" ry="7.1" transform="rotate(64 430.4 231.5)" fill="none" stroke="#c8c8c8" stroke-width=".8"/><ellipse cx="452.8" cy="220.4" rx="30.1" ry="7.5" transform="rotate(64 452.8 220.4)" fill="none" stroke="#c8c8c8" stroke-width=".8"/><path d="M427.8 286.8 C426.9 283.6 425.2 276.5 422.6 267.9 C420.0 259.3 415.0 244.4 412.1 235.0 C409.2 225.6 406.9 218.6 405.0 211.5 C403.1 204.4 401.8 197.7 401.0 192.6 C400.2 187.5 399.9 183.6 400.3 180.9 C400.7 178.2 402.0 177.6 403.4 176.6 C404.8 175.6 406.7 174.7 408.5 174.8 C410.3 174.9 412.3 176.1 414.4 177.4 C416.4 178.7 418.8 180.1 420.8 182.8 C422.8 185.5 424.3 188.6 426.2 193.8 C428.1 199.0 429.6 205.8 432.1 213.8 C434.7 221.9 438.5 233.9 441.5 242.1 C444.5 250.3 447.1 255.8 449.9 263.2 C452.7 270.6 457.0 282.9 458.4 286.8" fill="none" stroke="#c8c8c8" stroke-width=".8"/><path d="M452.8 286.8 C451.6 282.9 448.1 270.6 445.7 263.2 C443.3 255.8 441.3 250.3 438.6 242.1 C435.9 233.9 432.2 222.1 429.7 213.8 C427.2 205.6 425.3 198.1 423.8 192.6 C422.3 187.1 421.2 184.7 420.8 180.9 C420.4 177.1 420.8 172.2 421.5 169.6 C422.2 167.0 423.6 166.0 425.0 165.1 C426.4 164.2 427.3 163.7 429.7 164.4 C432.1 165.1 435.6 166.0 439.1 169.1 C442.6 172.2 447.0 177.7 450.9 183.2 C454.8 188.7 458.7 194.6 462.6 202.1 C466.5 209.6 471.2 220.4 474.4 227.9 C477.5 235.4 478.9 239.0 481.5 246.8 C484.1 254.7 487.3 267.2 489.7 275.0 C492.1 282.8 494.6 290.7 495.6 293.8" fill="none" stroke="#c8c8c8" stroke-width=".8"/><path d="M402.9 177.6 L424.1 166.1" fill="none" stroke="#c8c8c8" stroke-width=".8"/><path d="M408.5 174.8 L429.7 164.4" fill="none" stroke="#c8c8c8" stroke-width=".8"/><path d="M400.5 186.1 L421.0 176.6" fill="none" stroke="#c8c8c8" stroke-width=".8"/><path d="M426.2 190.8 L448.1 179.9" fill="none" stroke="#c8c8c8" stroke-width=".8"/><path d="M404.3 207.7 L425.0 197.8" fill="none" stroke="#c8c8c8" stroke-width=".8"/><path d="M431.1 195.5 L455.6 190.3" fill="none" stroke="#c8c8c8" stroke-width=".8"/><path d="M417.0 205.6 L438.6 193.8" fill="none" stroke="#c8c8c8" stroke-width=".8"/><path d="M420.3 219.9 L441.0 210.5" fill="none" stroke="#c8c8c8" stroke-width=".8"/><path d="M445.7 218.1 L464.5 209.6" fill="none" stroke="#c8c8c8" stroke-width=".8"/><path d="M446.6 242.5 L466.2 233.8" fill="none" stroke="#c8c8c8" stroke-width=".8"/><path d="M443.8 258.1 L466.9 247.9" fill="none" stroke="#c8c8c8" stroke-width=".8"/><path d="M455.6 249.1 L477.9 239.7" fill="none" stroke="#c8c8c8" stroke-width=".8"/><path d="M428.7 291.7 L451.1 281.0 L504.6 324.1 L484.1 336.4" fill="none" stroke="#c8c8c8" stroke-width=".8"/><path d="M451.1 281.0 L442.9 256.9" fill="none" stroke="#c8c8c8" stroke-width=".8"/><path d="M504.6 324.1 L492.3 291.1 L482.7 250.0" fill="none" stroke="#c8c8c8" stroke-width=".8"/><path d="M484.1 313.6 L467.6 277.4 L459.4 250.0" fill="none" stroke="#c8c8c8" stroke-width=".8"/><path d="M428.7 291.7 L484.1 336.4" fill="none" stroke="#c8c8c8" stroke-width=".8"/><ellipse cx="367.9" cy="308.4" rx="30.6" ry="12.2" fill="none" stroke="#2d78e0" stroke-width="1.5"/><ellipse cx="367.9" cy="331.9" rx="30.6" ry="12.2" fill="none" stroke="#2d78e0" stroke-width="1.5"/><path d="M429.1 268.8 L339.7 286.9" fill="none" stroke="#2d78e0" stroke-width="1.5" stroke-linejoin="round"/><path d="M339.7 286.9 L336.2 287.7 L332.8 288.5 L329.6 289.4 L326.5 290.4 L323.6 291.5 L320.9 292.6 L318.3 293.9 L316.0 295.1 L313.9 296.5 L312.0 297.9 L310.3 299.4 L308.9 300.9 L307.8 302.4 L306.8 304.0 L306.2 305.6 L305.8 307.2 L305.7 308.8 L305.9 310.4 L306.3 312.0 L307.0 313.6 L308.0 315.2 L309.2 316.7 L310.7 318.2 L312.4 319.7 L314.4 321.1 L316.6 322.4 L319.0 323.7 L321.6 324.9 L324.4 326.1 L327.4 327.2 L330.6 328.2 L333.9 329.1 L337.4 329.9 L341.0 330.6 L344.7 331.2 L348.5 331.8 L352.4 332.2 L356.3 332.5 L360.3 332.7 L364.3 332.8 L368.3 332.8 L372.2 332.7 L376.2 332.5 L380.1 332.2 L384.0 331.8 L387.7 331.3 L391.4 330.7 L395.0 330.0" fill="none" stroke="#2d78e0" stroke-width="1.5" stroke-linejoin="round"/><path d="M395.0 330.0 L484.4 311.9" fill="none" stroke="#2d78e0" stroke-width="1.5" stroke-linejoin="round"/><path d="M429.1 268.8 L484.4 311.9" fill="none" stroke="#2d78e0" stroke-width="1.5" stroke-linejoin="round"/><path d="M429.1 291.9 L339.7 310.5" fill="none" stroke="#2d78e0" stroke-width="1.5" stroke-linejoin="round"/><path d="M339.7 310.5 L336.2 311.2 L332.8 312.0 L329.6 312.9 L326.5 313.9 L323.6 315.0 L320.9 316.2 L318.3 317.4 L316.0 318.7 L313.9 320.0 L312.0 321.4 L310.3 322.9 L308.9 324.4 L307.8 325.9 L306.8 327.5 L306.2 329.1 L305.8 330.7 L305.7 332.3 L305.9 333.9 L306.3 335.5 L307.0 337.1 L308.0 338.7 L309.2 340.2 L310.7 341.7 L312.4 343.2 L314.4 344.6 L316.6 346.0 L319.0 347.2 L321.6 348.5 L324.4 349.6 L327.4 350.7 L330.6 351.7 L333.9 352.6 L337.4 353.4 L341.0 354.1 L344.7 354.8 L348.5 355.3 L352.4 355.7 L356.3 356.0 L360.3 356.2 L364.3 356.4 L368.3 356.4 L372.2 356.3 L376.2 356.1 L380.1 355.7 L384.0 355.3 L387.7 354.8 L391.4 354.2 L395.0 353.5" fill="none" stroke="#2d78e0" stroke-width="1.5" stroke-linejoin="round"/><path d="M395.0 353.5 L484.4 335.4" fill="none" stroke="#2d78e0" stroke-width="1.5" stroke-linejoin="round"/><path d="M429.1 268.8 L429.1 292.4" fill="none" stroke="#2d78e0" stroke-width="1.5" stroke-linejoin="round"/><path d="M339.7 286.9 L339.7 310.5" fill="none" stroke="#2d78e0" stroke-width="1.5" stroke-linejoin="round"/><path d="M395.0 330.0 L395.0 353.5" fill="none" stroke="#2d78e0" stroke-width="1.5" stroke-linejoin="round"/><path d="M305.6 308.8 L305.6 332.4" fill="none" stroke="#2d78e0" stroke-width="1.5" stroke-linejoin="round"/><path d="M312.6 295.9 L312.6 319.4" fill="none" stroke="#2d78e0" stroke-width="1.5" stroke-linejoin="round"/><path d="M323.2 325.8 L323.2 349.3" fill="none" stroke="#2d78e0" stroke-width="1.5" stroke-linejoin="round"/><path d="M356.2 332.4 L356.2 355.9" fill="none" stroke="#2d78e0" stroke-width="1.5" stroke-linejoin="round"/><path d="M337.4 308.4 L337.4 331.9" fill="none" stroke="#2d78e0" stroke-width="1.5" stroke-linejoin="round"/><path d="M398.5 308.4 L398.5 331.9" fill="none" stroke="#2d78e0" stroke-width="1.5" stroke-linejoin="round"/><path d="M353.8 319.4 L353.8 342.9" fill="none" stroke="#2d78e0" stroke-width="1.5" stroke-linejoin="round"/><path d="M380.9 320.1 L380.9 343.6" fill="none" stroke="#2d78e0" stroke-width="1.5" stroke-linejoin="round"/><path d="M353.8 320.1 L373.8 320.6" fill="none" stroke="#2d78e0" stroke-width="1.5" stroke-linejoin="round"/><g transform="rotate(-40 485.5 335.5)"><ellipse cx="485.5" cy="335.5" rx="44.5" ry="39.5" fill="#6a5220" fill-opacity=".92"/></g><path d="M485.5 335.5 L527.5 324.4 L527.8 326.7 L528.0 328.9 L528.0 331.1 L527.9 333.4 L527.7 335.7 L527.4 337.9 L526.9 340.2 L526.3 342.5 L525.6 344.7 L524.7 346.9 L523.8 349.0 L522.7 351.2 L521.6 353.3 L520.3 355.3 L518.9 357.2 L517.4 359.2Z" fill="#1c6a45" fill-opacity="1"/><path d="M485.5 335.5 L517.4 359.2 L516.2 360.6 L514.9 362.0 L513.5 363.4 L512.1 364.7 L510.6 366.0 L509.1 367.2 L507.5 368.4 L505.9 369.4 L504.3 370.5 L502.6 371.4 L500.9 372.3 L499.1 373.1 L497.3 373.9 L495.6 374.5 L493.7 375.1 L491.9 375.6Z" fill="#6f7378" fill-opacity="1"/><path d="M527.5 324.4 L527.7 325.5 L527.8 326.6 L527.9 327.6 L528.0 328.7 L528.0 329.8 L528.0 330.9 L528.0 332.0 L527.9 333.0 L527.9 334.1 L527.7 335.2 L527.6 336.3 L527.4 337.4 L527.2 338.5 L527.0 339.6 L526.8 340.7 L526.5 341.7 L526.2 342.8 L525.9 343.9 L525.5 344.9 L525.1 346.0 L524.7 347.1 L524.2 348.1 L523.8 349.1 L523.3 350.2 L522.7 351.2 L522.2 352.2 L521.6 353.2 L521.0 354.2 L520.4 355.1 L519.7 356.1 L519.1 357.0 L518.4 357.9 L517.7 358.9 L516.9 359.7 L516.2 360.6 L515.4 361.5 L514.6 362.3 L513.8 363.2 L512.9 364.0 L512.1 364.7 L511.2 365.5 L510.3 366.3 L509.4 367.0 L508.5 367.7 L507.5 368.4 L506.5 369.0 L505.6 369.7 L504.6 370.3 L503.6 370.9 L502.6 371.4 L501.5 372.0 L500.5 372.5 L499.5 373.0 L498.4 373.4 L497.3 373.9 L496.3 374.3 L495.2 374.7 L494.1 375.0 L493.0 375.3 L491.9 375.6" fill="none" stroke="#e6e6e6" stroke-width="1"/><path d="M489.0 376.3 L485.6 376.8 L482.3 377.1 L479.0 377.1 L475.7 376.9 L472.5 376.4 L469.4 375.6 L466.3 374.6 L463.4 373.4 L460.6 371.9 L458.0 370.2 L455.5 368.3 L453.3 366.1 L451.2 363.8 L449.3 361.4 L447.7 358.7 L446.3 355.9 L445.1 353.0 L444.2 350.0 L443.5 346.9 L443.1 343.7 L443.0 340.5 L443.1 337.2 L443.5 334.0 L444.1 330.7 L445.0 327.5 L446.2 324.3 L447.6 321.2 L449.2 318.2 L451.0 315.2 L453.1 312.5 L455.4 309.8 L457.8 307.3 L460.4 305.0 L463.2 302.9 L466.1 300.9 L469.1 299.2 L472.2 297.7 L475.4 296.5 L478.7 295.5 L482.0 294.7 L485.4 294.2 L488.7 293.9 L492.0 293.9 L495.3 294.1 L498.5 294.6 L501.6 295.4 L504.7 296.4 L507.6 297.6 L510.4 299.1 L513.0 300.8 L515.5 302.7 L517.7 304.9 L519.8 307.2 L521.7 309.6 L523.3 312.3 L524.7 315.1 L525.9 318.0 L526.8 321.0 L527.5 324.1 L527.9 327.3" fill="none" stroke="#1fd070" stroke-width="3.2" stroke-linecap="butt"/><path d="M484.9 371.1 L493.9 375.1 L485.4 379.1Z" fill="#1fd070"/><path d="M484.1 336.4 L484.1 313.6 L456.6 313.6 M484.1 336.4 L438.8 344.6" fill="none" stroke="#7f9fb0" stroke-width="1.2"/><path d="M484.1 336.4 L511.5 330.4" stroke="#2fbf80" stroke-width="1"/><path d="M511.5 330.4 Q514.2 351.5 491.7 361.1" fill="none" stroke="#3fae8a" stroke-width="1"/><circle cx="511.5" cy="330.4" r="1.4" fill="#3fbf8a"/><circle cx="491.7" cy="361.1" r="1.4" fill="#3fbf8a"/><path d="M440 299.5 L535 375.4" stroke="#2a8a55" stroke-width=".8" opacity=".7"/><rect x="426.5" y="266.2" width="5.2" height="5.2" fill="#84d820"/><rect x="337.1" y="284.3" width="5.2" height="5.2" fill="#84d820"/><rect x="381.8" y="298.0" width="5.2" height="5.2" fill="#84d820"/><rect x="337.1" y="306.2" width="5.2" height="5.2" fill="#84d820"/><rect x="426.5" y="289.3" width="5.2" height="5.2" fill="#84d820"/><rect x="351.2" y="317.5" width="5.2" height="5.2" fill="#84d820"/><rect x="364.6" y="329.0" width="5.2" height="5.2" fill="#84d820"/><rect x="337.1" y="334.5" width="5.2" height="5.2" fill="#84d820"/><rect x="378.3" y="339.9" width="5.2" height="5.2" fill="#84d820"/><rect x="308.9" y="339.9" width="5.2" height="5.2" fill="#84d820"/><rect x="392.4" y="350.9" width="5.2" height="5.2" fill="#84d820"/><rect x="435.9" y="342.7" width="5.2" height="5.2" fill="#84d820"/><rect x="454.0" y="311.0" width="5.2" height="5.2" fill="#84d820"/><rect x="481.5" y="311.0" width="5.2" height="5.2" fill="#84d820"/><rect x="481.5" y="333.8" width="5.2" height="5.2" fill="#84d820"/><rect x="436.2" y="342.0" width="5.2" height="5.2" fill="#84d820"/><rect x="392.2" y="323.8" width="5.6" height="10" fill="#84d820"/><rect x="505" y="343.5" width="31.5" height="10.5" fill="#c8ccd0"/><rect x="506" y="344.5" width="26" height="8.5" fill="#2f7fd6"/><path d="M516.4 415.8 V457" stroke="#2a5fa0" stroke-width="1"/><path d="M502 446.6 L544.2 438.7" stroke="#8a5c60" stroke-width="1"/><path d="M494.4 425.8 L527.3 452.8" stroke="#3f8f70" stroke-width="1"/><path d="M73.7 415.4 V429.4" stroke="#c8c8c8" stroke-width="1"/><path d="M66.9 430 L73.9 428.4 L85.7 432.2 L73.9 434.7Z" fill="none" stroke="#b06060" stroke-width=".9"/><path d="M66.9 430 L73.9 434.7 " fill="none" stroke="#d0d0d0" stroke-width=".9"/><path d="M67.1 430 V444 M73.9 434.7 V447.2 M85.7 432.2 V444" stroke="#2f6fc8" stroke-width="1.1"/><path d="M67.2 444 L73.9 447.2" stroke="#3fae5a" stroke-width="1"/><path d="M73.9 447.2 L85.7 444" stroke="#c05050" stroke-width="1"/><path d="M85.7 444 L103.6 441.1" stroke="#d0d0d0" stroke-width="1"/><path d="M58.7 435.1 L69.5 445.2" stroke="#d0d0d0" stroke-width="1"/><path d="M75.5 430.6 L80.5 432.6 M75.5 432.8 L80.5 430.4" stroke="#f0f0f0" stroke-width=".9"/><text x="70.8" y="413" font-size="9" fill="#2a6fd0" font-family="Liberation Sans, sans-serif">Z</text><text x="52.4" y="436" font-size="9" fill="#2f9a60" font-family="Liberation Sans, sans-serif">Y</text><text x="107" y="444" font-size="9" fill="#b85050" font-family="Liberation Sans, sans-serif">X</text><text x="507.2" y="351.6" font-size="7.4" fill="#ffffff" font-family="Liberation Mono, monospace" textLength="24" lengthAdjust="spacingAndGlyphs">73.79&#176;</text></svg>
<div style="left:249px;top:448px;width:133px;height:12.5px;background:#2a2d31;"></div>
<span class="t" style="left:252px;top:449.46px;font-size:7.9px;line-height:9.88px;color:#c4c6c9;font-family:'Liberation Mono','DejaVu Sans Mono',monospace;">*** MANIP_ROTATE (copy) ***</span>
<div style="left:249px;top:464px;width:109.5px;height:12.5px;background:#2a2d31;"></div>
<span class="t" style="left:252px;top:465.46px;font-size:7.9px;line-height:9.88px;color:#c4c6c9;font-family:'Liberation Mono','DejaVu Sans Mono',monospace;">Copy mode: single copy</span>
<div style="left:249px;top:480.5px;width:312.5px;height:12.5px;background:#2a2d31;"></div>
<div style="left:251px;top:482px;width:1px;height:9.5px;background:#e0e0e0;"></div>
<span class="t" style="left:253.6px;top:481.7px;font-size:7.9px;line-height:10px;color:#d4d6d9;font-family:'Liberation Mono','DejaVu Sans Mono',monospace">Enter rotation angle or [<span style="background:#7a7d80;color:#e8c060">C</span><span style="background:#7a7d80">opy</span>/<span style="background:#7a7d80;color:#e8c060">R</span><span style="background:#7a7d80">epeat</span>]:</span>
<i class="ar" style="left:551.8px;top:485.4px;border-width:0 2.4px 2.6px 2.4px;border-bottom-color:#f0f0f0"></i>
<svg style="left:887px;top:107px;" width="12" height="3" viewBox="0 0 12 3"><circle cx="1.5" cy="1.5" r=".7" fill="#b0b4b8"/><circle cx="4.1" cy="1.5" r=".7" fill="#b0b4b8"/><circle cx="6.7" cy="1.5" r=".7" fill="#b0b4b8"/><circle cx="9.3" cy="1.5" r=".7" fill="#b0b4b8"/></svg>
<div style="left:791.5px;top:114.5px;width:150.5px;height:15px;background:#3b4148;border-radius:1px;"></div>
<span class="t" style="left:794.5px;top:116.78px;font-size:9px;line-height:11.25px;color:#e8e9eb;transform-origin:0 50%;transform:scaleX(0.86);text-shadow:.3px 0 0 #e8e9eb;">All (6)</span>
<svg style="left:932.7px;top:120.35px;" width="6.6" height="4.3" viewBox="0 0 6.6 4.3"><path d="M1 1 L3.3 3.3 L5.6 1" fill="none" stroke="#aeb2b7" stroke-width="1"/></svg>
<svg style="left:944px;top:116px;" width="12" height="12" viewBox="0 0 12 12"><path d="M1.5 1.5 H9.5 L6.4 5.6 V10 L4.6 9 V5.6 Z" fill="none" stroke="#b8bbbf" stroke-width=".9" stroke-linejoin="round"/><path d="M8.8 7 L9.6 8.6 L8.8 10.4 L8 8.6Z" fill="#e0a030"/></svg>
<div style="left:958px;top:115px;width:15px;height:13.5px;background:#b9dcfd;border-radius:1px;"></div>
<svg style="left:958px;top:115px;" width="15" height="13.5" viewBox="0 0 15 13.5"><circle cx="7.6" cy="6.4" r="3.1" fill="#2266c8"/><circle cx="6.8" cy="5.4" r="1" fill="#7fb2f0"/></svg>
<div style="left:798px;top:132.2px;width:177px;height:12.67px;background:#3a3f46;"></div>
<svg style="left:790.6px;top:135.93px;" width="6" height="6" viewBox="0 0 6 6"><rect x="0" y="0" width="6" height="6" fill="#e4e5e7"/><rect x="1.2" y="2.4" width="3.6" height="1.2" fill="#2d3237"/></svg>
<span class="t" style="left:800.2px;top:133.56px;font-size:8.6px;line-height:10.75px;color:#f2f3f4;font-weight:700;font-family:'DejaVu Sans','Liberation Sans',sans-serif;transform-origin:0 50%;transform:scaleX(0.86);">General</span>
<div style="left:798px;top:157.74px;width:177px;height:0.8px;background:#373c42;"></div>
<span class="t" style="left:800.6px;top:146.63px;font-size:8.6px;line-height:10.75px;color:#e8e9eb;transform-origin:0 50%;transform:scaleX(0.9);text-shadow:.25px 0 0 #e8e9eb;">Handle</span>
<span class="t" style="left:857.4px;top:146.63px;font-size:8.6px;line-height:10.75px;color:#7d8187;transform-origin:0 50%;transform:scaleX(0.9);text-shadow:.25px 0 0 #7d8187;">*Varies*</span>
<div style="left:798px;top:170.81px;width:177px;height:0.8px;background:#373c42;"></div>
<span class="t" style="left:800.6px;top:159.7px;font-size:8.6px;line-height:10.75px;color:#e8e9eb;transform-origin:0 50%;transform:scaleX(0.9);text-shadow:.25px 0 0 #e8e9eb;">Color</span>
<div style="left:858px;top:159.77px;width:10px;height:10px;background:#ffffff;"></div>
<span class="t" style="left:871.4px;top:159.7px;font-size:8.6px;line-height:10.75px;color:#e8e9eb;transform-origin:0 50%;transform:scaleX(0.9);text-shadow:.25px 0 0 #e8e9eb;">ByLayer</span>
<div style="left:798px;top:183.88px;width:177px;height:0.8px;background:#373c42;"></div>
<span class="t" style="left:800.6px;top:172.77px;font-size:8.6px;line-height:10.75px;color:#e8e9eb;transform-origin:0 50%;transform:scaleX(0.9);text-shadow:.25px 0 0 #e8e9eb;">Layer</span>
<span class="t" style="left:857.4px;top:172.77px;font-size:8.6px;line-height:10.75px;color:#e8e9eb;transform-origin:0 50%;transform:scaleX(0.9);text-shadow:.25px 0 0 #e8e9eb;">0</span>
<div style="left:798px;top:196.95px;width:177px;height:0.8px;background:#373c42;"></div>
<span class="t" style="left:800.6px;top:185.84px;font-size:8.6px;line-height:10.75px;color:#e8e9eb;transform-origin:0 50%;transform:scaleX(0.9);text-shadow:.25px 0 0 #e8e9eb;">Linetype</span>
<div style="left:858.5px;top:190.71px;width:60px;height:1px;background:#c4c7ca;"></div>
<span class="t" style="left:921.4px;top:185.84px;font-size:8.6px;line-height:10.75px;color:#e8e9eb;transform-origin:0 50%;transform:scaleX(0.9);text-shadow:.25px 0 0 #e8e9eb;">ByLayer</span>
<div style="left:798px;top:210.02px;width:177px;height:0.8px;background:#373c42;"></div>
<span class="t" style="left:800.6px;top:198.91px;font-size:8.6px;line-height:10.75px;color:#e8e9eb;transform-origin:0 50%;transform:scaleX(0.9);text-shadow:.25px 0 0 #e8e9eb;">Linetype scale</span>
<span class="t" style="left:857.4px;top:198.91px;font-size:8.6px;line-height:10.75px;color:#e8e9eb;transform-origin:0 50%;transform:scaleX(0.9);text-shadow:.25px 0 0 #e8e9eb;">1</span>
<div style="left:798px;top:223.09px;width:177px;height:0.8px;background:#373c42;"></div>
<span class="t" style="left:800.6px;top:211.98px;font-size:8.6px;line-height:10.75px;color:#e8e9eb;transform-origin:0 50%;transform:scaleX(0.9);text-shadow:.25px 0 0 #e8e9eb;">Plot style</span>
<span class="t" style="left:857.4px;top:211.98px;font-size:8.6px;line-height:10.75px;color:#7d8187;transform-origin:0 50%;transform:scaleX(0.9);text-shadow:.25px 0 0 #7d8187;">ByColor</span>
<div style="left:798px;top:236.16px;width:177px;height:0.8px;background:#373c42;"></div>
<span class="t" style="left:800.6px;top:225.05px;font-size:8.6px;line-height:10.75px;color:#e8e9eb;transform-origin:0 50%;transform:scaleX(0.9);text-shadow:.25px 0 0 #e8e9eb;">Lineweight</span>
<div style="left:858.5px;top:229.92px;width:60px;height:1px;background:#c4c7ca;"></div>
<span class="t" style="left:921.4px;top:225.05px;font-size:8.6px;line-height:10.75px;color:#e8e9eb;transform-origin:0 50%;transform:scaleX(0.9);text-shadow:.25px 0 0 #e8e9eb;">ByLayer</span>
<div style="left:798px;top:249.23px;width:177px;height:0.8px;background:#373c42;"></div>
<span class="t" style="left:800.6px;top:238.12px;font-size:8.6px;line-height:10.75px;color:#e8e9eb;transform-origin:0 50%;transform:scaleX(0.9);text-shadow:.25px 0 0 #e8e9eb;">Transparency</span>
<span class="t" style="left:857.4px;top:238.12px;font-size:8.6px;line-height:10.75px;color:#e8e9eb;transform-origin:0 50%;transform:scaleX(0.9);text-shadow:.25px 0 0 #e8e9eb;">ByLayer</span>
<div style="left:798px;top:262.3px;width:177px;height:0.8px;background:#373c42;"></div>
<span class="t" style="left:800.6px;top:251.19px;font-size:8.6px;line-height:10.75px;color:#e8e9eb;transform-origin:0 50%;transform:scaleX(0.9);text-shadow:.25px 0 0 #e8e9eb;">Hyperlink</span>
<div style="left:798px;top:262.9px;width:177px;height:12.67px;background:#3a3f46;"></div>
<svg style="left:790.6px;top:266.63px;" width="6" height="6" viewBox="0 0 6 6"><rect x="0" y="0" width="6" height="6" fill="#e4e5e7"/><rect x="1.2" y="2.4" width="3.6" height="1.2" fill="#2d3237"/></svg>
<span class="t" style="left:800.2px;top:264.26px;font-size:8.6px;line-height:10.75px;color:#f2f3f4;font-weight:700;font-family:'DejaVu Sans','Liberation Sans',sans-serif;transform-origin:0 50%;transform:scaleX(0.86);">3D Visualization</span>
<div style="left:798px;top:288.44px;width:177px;height:0.8px;background:#373c42;"></div>
<span class="t" style="left:800.6px;top:277.33px;font-size:8.6px;line-height:10.75px;color:#e8e9eb;transform-origin:0 50%;transform:scaleX(0.9);text-shadow:.25px 0 0 #e8e9eb;">Material</span>
<span class="t" style="left:857.4px;top:277.33px;font-size:8.6px;line-height:10.75px;color:#e8e9eb;transform-origin:0 50%;transform:scaleX(0.9);text-shadow:.25px 0 0 #e8e9eb;">ByLayer</span>
<div style="left:854.4px;top:145.27px;width:0.8px;height:117.63px;background:#373c42;"></div>
<div style="left:854.4px;top:275.97px;width:0.8px;height:13.07px;background:#373c42;"></div>
<div style="left:797.4px;top:132.2px;width:0.8px;height:156.84px;background:#373c42;"></div>
<svg style="left:981px;top:117.6px;" width="16" height="16" viewBox="0 0 16 16"><path d="M1 5 H15 M1 11 H15" stroke="#d4d6d9" stroke-width=".9"/><circle cx="5" cy="5" r="1.5" fill="#2d3237" stroke="#d4d6d9" stroke-width=".9"/><circle cx="11" cy="11" r="1.5" fill="#2d3237" stroke="#d4d6d9" stroke-width=".9"/></svg>
<svg style="left:981px;top:147px;" width="16" height="16" viewBox="0 0 16 16"><path d="M2 6.5 L6 3 H14.5 L10.5 6.5Z M2 9.5 H10.5 L14.5 6 M2 12.5 H10.5 L14.5 9" fill="none" stroke="#d4d6d9" stroke-width="1" stroke-linejoin="round"/></svg>
<svg style="left:981px;top:175.4px;" width="16" height="16" viewBox="0 0 16 16"><rect x="3" y="2.5" width="4" height="4.6" rx="1" fill="none" stroke="#d4d6d9" stroke-width="1"/><rect x="9.4" y="2.5" width="4" height="4.6" rx="1" fill="none" stroke="#d4d6d9" stroke-width="1"/><rect x="3" y="9.4" width="4" height="4.6" rx="1" fill="none" stroke="#d4d6d9" stroke-width="1"/><rect x="9.4" y="9.4" width="4" height="4.6" rx="1" fill="none" stroke="#d4d6d9" stroke-width="1"/></svg>
<span class="t" style="left:989.2px;top:208.03px;font-size:7px;line-height:8.75px;color:#e8e9eb;font-weight:700;transform:translateX(-50%);"><i style="font-family:'Liberation Serif',serif;font-size:10.5px">f</i>(<i>x</i>)</span>
<svg style="left:981px;top:233.4px;" width="16" height="16" viewBox="0 0 16 16"><path d="M6.2 5 V11.4 A2 2 0 0 0 10.2 11.4 V4.6 A1.3 1.3 0 0 0 7.6 4.6 V10.8" fill="none" stroke="#d4d6d9" stroke-width="1" stroke-linecap="round"/></svg>
<svg style="left:981px;top:262px;" width="16" height="16" viewBox="0 0 16 16"><path d="M2.5 13.5 H13.5 V4 Z" fill="none" stroke="#d4d6d9" stroke-width="1" stroke-linejoin="round"/><path d="M3.4 11 L9.4 3 L11 4.2 L5.4 12" fill="none" stroke="#d4d6d9" stroke-width=".9"/><path d="M9 13.5 V10 H11.5" fill="none" stroke="#d4d6d9" stroke-width=".8"/></svg>
<svg style="left:981px;top:290.5px;" width="16" height="16" viewBox="0 0 16 16"><ellipse cx="8" cy="6.4" rx="5" ry="4.6" fill="none" stroke="#d4d6d9" stroke-width="1"/><path d="M5.8 2.4 V10.6 M8 1.8 V11 M10.2 2.4 V10.6 M5.6 11 H10.4 M6.6 13.5 H9.4 M8 11 V13.5" stroke="#d4d6d9" stroke-width=".8" fill="none"/></svg>
<svg style="left:981px;top:319px;" width="16" height="16" viewBox="0 0 16 16"><rect x="3" y="2.6" width="10" height="6.4" fill="none" stroke="#d4d6d9" stroke-width="1"/><path d="M5 7 V5.4 M7 7 V4.6 M9 7 V5.4 M11 7 V4.6" stroke="#d4d6d9" stroke-width=".8"/><path d="M6.4 9 V11.4 H9.6 V9 M8 11.4 V14" fill="none" stroke="#d4d6d9" stroke-width=".9"/></svg>
<svg style="left:981px;top:349px;" width="16" height="16" viewBox="0 0 16 16"><path d="M4.4 12 A3 3 0 0 1 4.2 6.2 A4 4 0 0 1 11.8 6.4 A2.9 2.9 0 0 1 11.8 12 Z" fill="none" stroke="#d4d6d9" stroke-width="1" stroke-linejoin="round"/><path d="M6.6 9.2 A1.2 1.2 0 0 1 8.4 8.4 M9.4 9.2 A1.2 1.2 0 0 1 7.6 10" fill="none" stroke="#d4d6d9" stroke-width=".9"/></svg>
<svg style="left:981px;top:377.5px;" width="16" height="16" viewBox="0 0 16 16"><path d="M8 2.4 L14 13 H2 Z" fill="none" stroke="#d4d6d9" stroke-width="1" stroke-linejoin="round"/><path d="M8 6.4 V9.8 M8 10.8 V12" stroke="#d4d6d9" stroke-width="1"/></svg>
<svg style="left:4.5px;top:502px;" width="9" height="8" viewBox="0 0 9 8"><path d="M0 1 H8.5 M0 3.7 H8.5 M0 6.4 H8.5" stroke="#5f6368" stroke-width=".9"/></svg>
<div style="left:17.5px;top:498px;width:49px;height:12px;background:#2c3034;"></div>
<svg style="left:25px;top:502px;" width="10" height="9" viewBox="0 0 10 9"><rect x=".6" y=".6" width="8.6" height="7.6" fill="none" stroke="#e4e5e7" stroke-width=".9"/><path d="M2 6.4 V4.6 H4" fill="none" stroke="#e4e5e7" stroke-width=".8"/></svg>
<span class="t" style="left:37.8px;top:501.7px;font-size:8px;line-height:10.0px;color:#ffffff;font-weight:700;transform-origin:0 50%;transform:scaleX(0.88);">Model</span>
<span class="t" style="left:70px;top:501.7px;font-size:8px;line-height:10.0px;color:#d4d6d9;transform-origin:0 50%;transform:scaleX(0.87);">Layout1</span>
<div style="left:99.6px;top:499px;width:0.8px;height:11px;background:#3a3d42;"></div>
<span class="t" style="left:104px;top:501.7px;font-size:8px;line-height:10.0px;color:#d4d6d9;transform-origin:0 50%;transform:scaleX(0.87);">Layout2</span>
<svg style="left:136.8px;top:501.5px;" width="9" height="9" viewBox="0 0 9 9"><path d="M4.2 .4 V8 M.4 4.2 H8" stroke="#d4d6d9" stroke-width=".9"/></svg>
<svg style="left:360.5px;top:501.5px;" width="10" height="10" viewBox="0 0 10 10"><rect x=".6" y=".8" width="8.2" height="8" fill="none" stroke="#e4e5e7" stroke-width=".9"/><path d="M2 7 V5 H4" fill="none" stroke="#e4e5e7" stroke-width=".8"/></svg>
<span class="t" style="left:373.8px;top:501.95px;font-size:7.6px;line-height:9.5px;color:#d6d8da;font-weight:700;transform-origin:0 50%;transform:scaleX(0.9);">TILE</span>
<svg style="left:394.5px;top:501.5px;" width="10" height="10" viewBox="0 0 10 10"><path d="M4.4 5.4 V1.4 M4.4 5.4 L1 8.6 M4.4 5.4 L8 8.6" stroke="#3f8fe8" stroke-width="1.1" fill="none"/><path d="M3.2 2.4 L4.4 .6 L5.6 2.4Z" fill="#3f8fe8"/></svg>
<span class="t" style="left:407.6px;top:501.95px;font-size:7.6px;line-height:9.5px;color:#d6d8da;font-weight:700;transform-origin:0 50%;transform:scaleX(0.9);">1:1</span>
<svg style="left:424px;top:501.5px;" width="10" height="10" viewBox="0 0 10 10"><path d="M2.4 .6 V8.6 M5.2 .6 V8.6 M8 .6 V8.6 M.6 2 H9.4 M.6 4.6 H9.4 M.6 7.2 H9.4" stroke="#d0d2d5" stroke-width=".8"/></svg>
<span class="t" style="left:436.8px;top:501.95px;font-size:7.6px;line-height:9.5px;color:#d6d8da;font-weight:700;transform-origin:0 50%;transform:scaleX(0.9);">GRID</span>
<svg style="left:460px;top:501.5px;" width="10" height="10" viewBox="0 0 10 10"><path d="M1.4 1 V8.4 M4.2 1 V8.4 M7 1 V8.4 M.4 2 H8.4 M.4 4.6 H8.4 M.4 7.2 H8.4" stroke="#c04a4a" stroke-width=".9" stroke-dasharray="1 .9"/></svg>
<span class="t" style="left:472.6px;top:501.95px;font-size:7.6px;line-height:9.5px;color:#d6d8da;font-weight:700;transform-origin:0 50%;transform:scaleX(0.9);">SNAP</span>
<svg style="left:498.5px;top:501.5px;" width="10" height="10" viewBox="0 0 10 10"><path d="M1.6 .6 V8.2 H8.6" fill="none" stroke="#4fae5a" stroke-width="1"/><path d="M1.6 4.4 H4.8 V8.2" fill="none" stroke="#c04a4a" stroke-width=".9"/></svg>
<span class="t" style="left:511px;top:501.95px;font-size:7.6px;line-height:9.5px;color:#d6d8da;font-weight:700;transform-origin:0 50%;transform:scaleX(0.9);">ORTHO</span>
<svg style="left:543px;top:501.5px;" width="10" height="10" viewBox="0 0 10 10"><circle cx="4.4" cy="5" r="3.2" fill="none" stroke="#e4e5e7" stroke-width=".9" stroke-dasharray="15 4"/><path d="M4.4 5 L8.6 1" stroke="#e4e5e7" stroke-width=".9"/></svg>
<span class="t" style="left:554.8px;top:501.95px;font-size:7.6px;line-height:9.5px;color:#d6d8da;font-weight:700;transform-origin:0 50%;transform:scaleX(0.9);">POLAR</span>
<svg style="left:585px;top:501.5px;" width="10" height="10" viewBox="0 0 10 10"><path d="M.8 8.4 L8.6 .8" stroke="#c04a4a" stroke-width="1.1"/><path d="M.6 8.6 H6" stroke="#e4e5e7" stroke-width=".8"/></svg>
<span class="t" style="left:597.8px;top:501.95px;font-size:7.6px;line-height:9.5px;color:#d6d8da;font-weight:700;transform-origin:0 50%;transform:scaleX(0.9);">STRACK</span>
<div style="left:628px;top:498.5px;width:42px;height:13px;background:#27384f;border:1px solid #3566b4;border-bottom:none;box-sizing:border-box;border-radius:1.5px 1.5px 0 0;"></div>
<svg style="left:631.5px;top:501.5px;" width="10" height="10" viewBox="0 0 10 10"><rect x="1.6" y="2" width="7" height="5.6" fill="none" stroke="#e4e5e7" stroke-width=".9"/><rect x=".4" y=".8" width="2.6" height="2.6" fill="#27384f" stroke="#e05050" stroke-width=".8"/></svg>
<span class="t" style="left:644px;top:501.95px;font-size:7.6px;line-height:9.5px;color:#d6d8da;font-weight:700;transform-origin:0 50%;transform:scaleX(0.9);">ESNAP</span>
<svg style="left:674.5px;top:501.5px;" width="10" height="10" viewBox="0 0 10 10"><path d="M.4 2.4 H8.6 M.4 5 H8.6 M.4 7.6 H8.6" stroke="#d0d2d5" stroke-width="1"/></svg>
<span class="t" style="left:687px;top:501.95px;font-size:7.6px;line-height:9.5px;color:#d6d8da;font-weight:700;transform-origin:0 50%;transform:scaleX(0.9);">LWD</span>
<div style="left:704.5px;top:498.5px;width:36.5px;height:13px;background:#27384f;border:1px solid #3566b4;border-bottom:none;box-sizing:border-box;border-radius:1.5px 1.5px 0 0;"></div>
<svg style="left:708px;top:501.5px;" width="10" height="10" viewBox="0 0 10 10"><path d="M2 1 V8.4 H8.6" fill="none" stroke="#e4e5e7" stroke-width=".9"/><path d="M4 6.6 L7.6 3 M7.8 5 V2.8 H5.6" fill="none" stroke="#e0a030" stroke-width=".9"/><path d="M.8 2.4 L2 .6 L3.2 2.4" fill="none" stroke="#e4e5e7" stroke-width=".7"/></svg>
<span class="t" style="left:720px;top:501.95px;font-size:7.6px;line-height:9.5px;color:#d6d8da;font-weight:700;transform-origin:0 50%;transform:scaleX(0.9);">DUCS</span>
<div style="left:743px;top:498.5px;width:32.5px;height:13px;background:#27384f;border:1px solid #3566b4;border-bottom:none;box-sizing:border-box;border-radius:1.5px 1.5px 0 0;"></div>
<svg style="left:746.5px;top:501.5px;" width="10" height="10" viewBox="0 0 10 10"><path d="M.8 1 V4.6 H3.4" fill="none" stroke="#e4e5e7" stroke-width=".8"/><rect x="2.6" y="5" width="6.6" height="3.4" fill="none" stroke="#e4e5e7" stroke-width=".8"/><path d="M4 6.7 H8" stroke="#e4e5e7" stroke-width=".7"/></svg>
<span class="t" style="left:758.2px;top:501.95px;font-size:7.6px;line-height:9.5px;color:#d6d8da;font-weight:700;transform-origin:0 50%;transform:scaleX(0.9);">DYN</span>
<div style="left:777px;top:498.5px;width:36.5px;height:13px;background:#27384f;border:1px solid #3566b4;border-bottom:none;box-sizing:border-box;border-radius:1.5px 1.5px 0 0;"></div>
<svg style="left:780.5px;top:501.5px;" width="10" height="10" viewBox="0 0 10 10"><rect x="1.6" y="1.6" width="7.6" height="6.8" fill="none" stroke="#e4e5e7" stroke-width=".8"/><path d="M1.6 4 H9.2 M4 4 V8.4 M6.6 4 V8.4 M1.6 6.2 H9.2" stroke="#e4e5e7" stroke-width=".6"/><path d="M.2 .4 L2.4 .4 L.2 2.6Z" fill="#e4e5e7"/></svg>
<span class="t" style="left:792px;top:501.95px;font-size:7.6px;line-height:9.5px;color:#d6d8da;font-weight:700;transform-origin:0 50%;transform:scaleX(0.9);">QUAD</span>
<svg style="left:818.5px;top:501.5px;" width="10" height="10" viewBox="0 0 10 10"><circle cx="4.2" cy="3.8" r="3" fill="none" stroke="#d0d2d5" stroke-width=".9"/><path d="M3 7.6 H5.4 M3.4 9 H5" stroke="#d0d2d5" stroke-width=".8"/><path d="M4.2 3 V5" stroke="#d0d2d5" stroke-width=".7"/></svg>
<span class="t" style="left:831px;top:501.95px;font-size:7.6px;line-height:9.5px;color:#d6d8da;font-weight:700;transform-origin:0 50%;transform:scaleX(0.9);">HIDE</span>
<svg style="left:854px;top:501.5px;" width="10" height="10" viewBox="0 0 10 10"><rect x=".6" y="1" width="8.4" height="7.6" fill="none" stroke="#e4e5e7" stroke-width=".9"/><path d="M.6 3.4 H9 M3.4 3.4 V8.6" stroke="#e4e5e7" stroke-width=".8"/><path d="M2 1 V3.4 M3.6 1 V3.4 M5.2 1 V3.4" stroke="#e4e5e7" stroke-width=".5"/></svg>
<span class="t" style="left:866px;top:501.32px;font-size:8.6px;line-height:10.75px;color:#e4e5e7;transform-origin:0 50%;transform:scaleX(0.9);">Modeling</span>
<svg style="left:903.2px;top:504.8px;" width="5.6" height="3.8" viewBox="0 0 5.6 3.8"><path d="M1 1 L2.8 2.8 L4.6 1" fill="none" stroke="#6d7278" stroke-width="0.9"/></svg>
<svg style="left:919px;top:501.5px;" width="10" height="10" viewBox="0 0 10 10"><path d="M2.6 4 V1 H7.4 V4" fill="none" stroke="#e4e5e7" stroke-width=".9"/><rect x=".8" y="4" width="8.4" height="3.6" rx=".8" fill="none" stroke="#e4e5e7" stroke-width=".9"/><path d="M2.8 7.6 V9 H7.2 V7.6" fill="none" stroke="#e4e5e7" stroke-width=".8"/></svg>
<span class="t" style="left:932.8px;top:501.95px;font-size:7.6px;line-height:9.5px;color:#d6d8da;font-weight:700;transform-origin:0 50%;transform:scaleX(0.9);">PUBLISH</span>
<svg style="left:969.5px;top:501.6px;" width="9" height="10" viewBox="0 0 9 10"><path d="M1.4 7.4 H7.6 L6.6 6 V3.6 A2.1 2.1 0 0 0 2.4 3.6 V6 Z M3.8 8.6 H5.2" fill="none" stroke="#3f4348" stroke-width=".9"/></svg>
<svg style="left:989px;top:500.4px;" width="4" height="11" viewBox="0 0 4 11"><circle cx="2" cy="1.6" r="1" fill="#f0f0f0"/><circle cx="2" cy="5.2" r="1" fill="#f0f0f0"/><circle cx="2" cy="8.8" r="1" fill="#f0f0f0"/></svg>
</div></body></html>
